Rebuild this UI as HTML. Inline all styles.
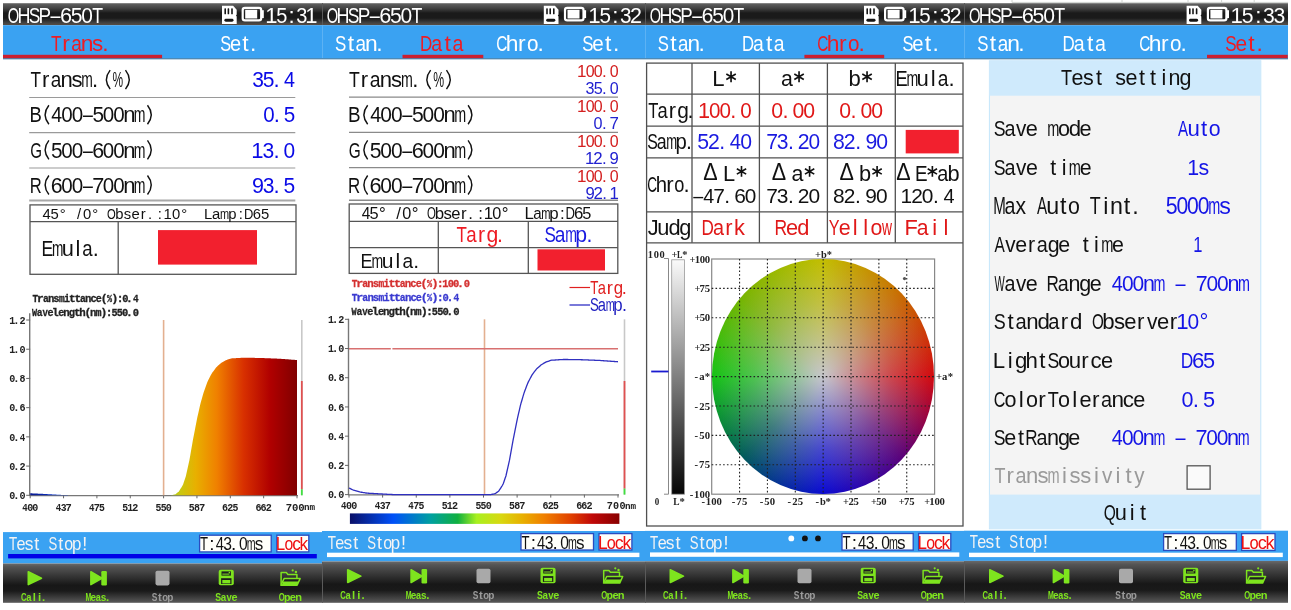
<!DOCTYPE html>
<html><head><meta charset="utf-8"><style>
html,body{margin:0;padding:0;background:#fff;width:1291px;height:610px;overflow:hidden}
svg{position:absolute;left:0;top:0;display:block}
text{font-kerning:none}
svg{will-change:transform}
</style></head><body>
<svg width="1291" height="610" viewBox="0 0 1291 610">
<defs><linearGradient id="hdr" x1="0" y1="0" x2="0" y2="1">
 <stop offset="0" stop-color="#9a9a9a"/><stop offset="0.06" stop-color="#5c5c5c"/><stop offset="0.25" stop-color="#404040"/>
 <stop offset="0.45" stop-color="#1a1a1a"/><stop offset="0.68" stop-color="#1a1a1a"/><stop offset="0.9" stop-color="#444"/><stop offset="1" stop-color="#5a4c40"/>
</linearGradient>
<linearGradient id="tb" x1="0" y1="0" x2="0" y2="1">
 <stop offset="0" stop-color="#6a6a6a"/><stop offset="0.08" stop-color="#555"/><stop offset="0.55" stop-color="#171717"/>
 <stop offset="0.7" stop-color="#1a1a1a"/><stop offset="1" stop-color="#5a5a5a"/>
</linearGradient><linearGradient id="spec" gradientUnits="userSpaceOnUse" x1="30.2" y1="0" x2="297" y2="0">
 <stop offset="0" stop-color="#0a1a90"/><stop offset="0.14" stop-color="#0a40e0"/>
 <stop offset="0.5" stop-color="#90d020"/><stop offset="0.56" stop-color="#c8c810"/>
 <stop offset="0.62" stop-color="#e8b000"/><stop offset="0.7" stop-color="#f08000"/>
 <stop offset="0.8" stop-color="#d83000"/><stop offset="0.9" stop-color="#b00000"/><stop offset="1" stop-color="#800000"/>
</linearGradient>
<linearGradient id="specbar" x1="0" y1="0" x2="1" y2="0">
 <stop offset="0" stop-color="#0a1068"/><stop offset="0.16" stop-color="#0050f8"/><stop offset="0.3" stop-color="#00a0a0"/>
 <stop offset="0.4" stop-color="#10b040"/><stop offset="0.47" stop-color="#a8f020"/><stop offset="0.56" stop-color="#d8d810"/>
 <stop offset="0.64" stop-color="#e8b000"/><stop offset="0.72" stop-color="#f08000"/><stop offset="0.82" stop-color="#e04000"/>
 <stop offset="0.9" stop-color="#c00808"/><stop offset="1" stop-color="#880000"/>
</linearGradient><linearGradient id="lbar" x1="0" y1="0" x2="0" y2="1"><stop offset="0" stop-color="#fafafa"/><stop offset="1" stop-color="#050505"/></linearGradient></defs>
<rect x="0" y="0" width="1291" height="610" fill="#fff"/>
<rect x="3" y="3" width="319" height="22.2" fill="url(#hdr)" />
<text x="7.71" y="22.7" font-family="Liberation Sans" font-weight="400" font-size="22.24" textLength="11.41" lengthAdjust="spacingAndGlyphs" fill="#fff" >O</text>
<text x="17.47" y="22.7" font-family="Liberation Sans" font-weight="400" font-size="22.24" textLength="12.94" lengthAdjust="spacingAndGlyphs" fill="#fff" >H</text>
<text x="28.68" y="22.7" font-family="Liberation Sans" font-weight="400" font-size="22.24" textLength="11.6" lengthAdjust="spacingAndGlyphs" fill="#fff" >S</text>
<text x="38.47" y="22.7" font-family="Liberation Sans" font-weight="400" font-size="22.24" textLength="12.54" lengthAdjust="spacingAndGlyphs" fill="#fff" >P</text>
<text x="50.55" y="22.7" font-family="Liberation Sans" font-weight="400" font-size="22.24" textLength="10.02" lengthAdjust="spacingAndGlyphs" fill="#fff" >–</text>
<text x="59.98" y="22.7" font-family="Liberation Sans" font-weight="400" font-size="22.24" textLength="12.06" lengthAdjust="spacingAndGlyphs" fill="#fff" >6</text>
<text x="70.77" y="22.7" font-family="Liberation Sans" font-weight="400" font-size="22.24" textLength="11.74" lengthAdjust="spacingAndGlyphs" fill="#fff" >5</text>
<text x="81.34" y="22.7" font-family="Liberation Sans" font-weight="400" font-size="22.24" textLength="11.65" lengthAdjust="spacingAndGlyphs" fill="#fff" >0</text>
<text x="92.29" y="22.7" font-family="Liberation Sans" font-weight="400" font-size="22.24" textLength="10.81" lengthAdjust="spacingAndGlyphs" fill="#fff" >T</text>
<path d="M222 5.8 H233.1 L236.7 9.8 V14.4 L236 15.5 L236.7 16.6 V23.9 H222 Z" fill="#fff"/>
<rect x="224.4" y="8.3" width="1.6" height="6" fill="#151515" rx="0.6"/>
<rect x="227.6" y="8.3" width="1.6" height="6" fill="#151515" rx="0.6"/>
<rect x="231.2" y="8.3" width="1.6" height="6" fill="#151515" rx="0.6"/>
<rect x="224.4" y="18.8" width="9.1" height="2.9" fill="#151515" rx="1.4"/>
<rect x="242.7" y="7.9" width="18.5" height="12.5" rx="2.2" fill="none" stroke="#fff" stroke-width="2.2"/>
<rect x="261.7" y="10.2" width="2.1" height="7.9" fill="#fff" />
<rect x="245.2" y="9.8" width="12" height="8.7" fill="#fff" />
<text x="265.33" y="22.7" font-family="Liberation Sans" font-weight="400" font-size="22.24" textLength="12.23" lengthAdjust="spacingAndGlyphs" fill="#fff" >1</text>
<text x="276.18" y="22.7" font-family="Liberation Sans" font-weight="400" font-size="22.24" textLength="11.12" lengthAdjust="spacingAndGlyphs" fill="#fff" >5</text>
<text x="296.18" y="22.7" font-family="Liberation Sans" font-weight="400" font-size="22.24" textLength="11.12" lengthAdjust="spacingAndGlyphs" fill="#fff" >3</text>
<text x="305.24" y="22.7" font-family="Liberation Sans" font-weight="400" font-size="22.24" textLength="12.23" lengthAdjust="spacingAndGlyphs" fill="#fff" >1</text>
<text x="288.61" y="22.7" font-family="Liberation Sans" font-weight="400" font-size="22.24" fill="#fff" >:</text>
<rect x="3" y="25.2" width="319" height="33.3" fill="#3aa2f2" />
<rect x="3" y="58.3" width="319" height="1" fill="#2c6d9c" />
<rect x="322" y="3" width="323" height="22.2" fill="url(#hdr)" />
<text x="326.8" y="22.7" font-family="Liberation Sans" font-weight="400" font-size="22.24" textLength="11.43" lengthAdjust="spacingAndGlyphs" fill="#fff" >O</text>
<text x="336.59" y="22.7" font-family="Liberation Sans" font-weight="400" font-size="22.24" textLength="12.97" lengthAdjust="spacingAndGlyphs" fill="#fff" >H</text>
<text x="347.83" y="22.7" font-family="Liberation Sans" font-weight="400" font-size="22.24" textLength="11.62" lengthAdjust="spacingAndGlyphs" fill="#fff" >S</text>
<text x="357.63" y="22.7" font-family="Liberation Sans" font-weight="400" font-size="22.24" textLength="12.57" lengthAdjust="spacingAndGlyphs" fill="#fff" >P</text>
<text x="369.73" y="22.7" font-family="Liberation Sans" font-weight="400" font-size="22.24" textLength="10.04" lengthAdjust="spacingAndGlyphs" fill="#fff" >–</text>
<text x="379.19" y="22.7" font-family="Liberation Sans" font-weight="400" font-size="22.24" textLength="12.09" lengthAdjust="spacingAndGlyphs" fill="#fff" >6</text>
<text x="390" y="22.7" font-family="Liberation Sans" font-weight="400" font-size="22.24" textLength="11.77" lengthAdjust="spacingAndGlyphs" fill="#fff" >5</text>
<text x="400.59" y="22.7" font-family="Liberation Sans" font-weight="400" font-size="22.24" textLength="11.67" lengthAdjust="spacingAndGlyphs" fill="#fff" >0</text>
<text x="411.57" y="22.7" font-family="Liberation Sans" font-weight="400" font-size="22.24" textLength="10.84" lengthAdjust="spacingAndGlyphs" fill="#fff" >T</text>
<path d="M543.8 5.8 H554.9 L558.5 9.8 V14.4 L557.8 15.5 L558.5 16.6 V23.9 H543.8 Z" fill="#fff"/>
<rect x="546.2" y="8.3" width="1.6" height="6" fill="#151515" rx="0.6"/>
<rect x="549.4" y="8.3" width="1.6" height="6" fill="#151515" rx="0.6"/>
<rect x="553" y="8.3" width="1.6" height="6" fill="#151515" rx="0.6"/>
<rect x="546.2" y="18.8" width="9.1" height="2.9" fill="#151515" rx="1.4"/>
<rect x="565" y="7.9" width="18.5" height="12.5" rx="2.2" fill="none" stroke="#fff" stroke-width="2.2"/>
<rect x="584" y="10.2" width="2.1" height="7.9" fill="#fff" />
<rect x="567.5" y="9.8" width="12" height="8.7" fill="#fff" />
<text x="599.39" y="22.7" font-family="Liberation Sans" font-weight="400" font-size="22.24" textLength="11.51" lengthAdjust="spacingAndGlyphs" fill="#fff" >5</text>
<text x="620.08" y="22.7" font-family="Liberation Sans" font-weight="400" font-size="22.24" textLength="11.51" lengthAdjust="spacingAndGlyphs" fill="#fff" >3</text>
<text x="630.11" y="22.7" font-family="Liberation Sans" font-weight="400" font-size="22.24" textLength="11.97" lengthAdjust="spacingAndGlyphs" fill="#fff" >2</text>
<text x="588.31 612.36" y="22.7" font-family="Liberation Sans" font-weight="400" font-size="22.24" fill="#fff" >1:</text>
<rect x="322" y="25.2" width="323" height="33.3" fill="#3aa2f2" />
<rect x="322" y="58.3" width="323" height="1" fill="#2c6d9c" />
<rect x="645" y="3" width="319" height="22.2" fill="url(#hdr)" />
<text x="649.71" y="22.7" font-family="Liberation Sans" font-weight="400" font-size="22.24" textLength="11.3" lengthAdjust="spacingAndGlyphs" fill="#fff" >O</text>
<text x="659.38" y="22.7" font-family="Liberation Sans" font-weight="400" font-size="22.24" textLength="12.82" lengthAdjust="spacingAndGlyphs" fill="#fff" >H</text>
<text x="670.49" y="22.7" font-family="Liberation Sans" font-weight="400" font-size="22.24" textLength="11.49" lengthAdjust="spacingAndGlyphs" fill="#fff" >S</text>
<text x="680.18" y="22.7" font-family="Liberation Sans" font-weight="400" font-size="22.24" textLength="12.42" lengthAdjust="spacingAndGlyphs" fill="#fff" >P</text>
<text x="692.14" y="22.7" font-family="Liberation Sans" font-weight="400" font-size="22.24" textLength="9.92" lengthAdjust="spacingAndGlyphs" fill="#fff" >–</text>
<text x="701.49" y="22.7" font-family="Liberation Sans" font-weight="400" font-size="22.24" textLength="11.95" lengthAdjust="spacingAndGlyphs" fill="#fff" >6</text>
<text x="712.18" y="22.7" font-family="Liberation Sans" font-weight="400" font-size="22.24" textLength="11.63" lengthAdjust="spacingAndGlyphs" fill="#fff" >5</text>
<text x="722.64" y="22.7" font-family="Liberation Sans" font-weight="400" font-size="22.24" textLength="11.53" lengthAdjust="spacingAndGlyphs" fill="#fff" >0</text>
<text x="733.49" y="22.7" font-family="Liberation Sans" font-weight="400" font-size="22.24" textLength="10.71" lengthAdjust="spacingAndGlyphs" fill="#fff" >T</text>
<path d="M864 5.8 H875.1 L878.7 9.8 V14.4 L878 15.5 L878.7 16.6 V23.9 H864 Z" fill="#fff"/>
<rect x="866.4" y="8.3" width="1.6" height="6" fill="#151515" rx="0.6"/>
<rect x="869.6" y="8.3" width="1.6" height="6" fill="#151515" rx="0.6"/>
<rect x="873.2" y="8.3" width="1.6" height="6" fill="#151515" rx="0.6"/>
<rect x="866.4" y="18.8" width="9.1" height="2.9" fill="#151515" rx="1.4"/>
<rect x="885.1" y="7.9" width="18.5" height="12.5" rx="2.2" fill="none" stroke="#fff" stroke-width="2.2"/>
<rect x="904.1" y="10.2" width="2.1" height="7.9" fill="#fff" />
<rect x="887.6" y="9.8" width="12" height="8.7" fill="#fff" />
<text x="919.35" y="22.7" font-family="Liberation Sans" font-weight="400" font-size="22.24" textLength="11.41" lengthAdjust="spacingAndGlyphs" fill="#fff" >5</text>
<text x="939.86" y="22.7" font-family="Liberation Sans" font-weight="400" font-size="22.24" textLength="11.41" lengthAdjust="spacingAndGlyphs" fill="#fff" >3</text>
<text x="949.8" y="22.7" font-family="Liberation Sans" font-weight="400" font-size="22.24" textLength="11.87" lengthAdjust="spacingAndGlyphs" fill="#fff" >2</text>
<text x="908.31 932.18" y="22.7" font-family="Liberation Sans" font-weight="400" font-size="22.24" fill="#fff" >1:</text>
<rect x="645" y="25.2" width="319" height="33.3" fill="#3aa2f2" />
<rect x="645" y="58.3" width="319" height="1" fill="#2c6d9c" />
<rect x="964" y="3" width="324" height="22.2" fill="url(#hdr)" />
<text x="968.9" y="22.7" font-family="Liberation Sans" font-weight="400" font-size="22.24" textLength="11.51" lengthAdjust="spacingAndGlyphs" fill="#fff" >O</text>
<text x="978.75" y="22.7" font-family="Liberation Sans" font-weight="400" font-size="22.24" textLength="13.06" lengthAdjust="spacingAndGlyphs" fill="#fff" >H</text>
<text x="990.08" y="22.7" font-family="Liberation Sans" font-weight="400" font-size="22.24" textLength="11.71" lengthAdjust="spacingAndGlyphs" fill="#fff" >S</text>
<text x="999.95" y="22.7" font-family="Liberation Sans" font-weight="400" font-size="22.24" textLength="12.66" lengthAdjust="spacingAndGlyphs" fill="#fff" >P</text>
<text x="1012.15" y="22.7" font-family="Liberation Sans" font-weight="400" font-size="22.24" textLength="10.11" lengthAdjust="spacingAndGlyphs" fill="#fff" >–</text>
<text x="1021.67" y="22.7" font-family="Liberation Sans" font-weight="400" font-size="22.24" textLength="12.18" lengthAdjust="spacingAndGlyphs" fill="#fff" >6</text>
<text x="1032.57" y="22.7" font-family="Liberation Sans" font-weight="400" font-size="22.24" textLength="11.85" lengthAdjust="spacingAndGlyphs" fill="#fff" >5</text>
<text x="1043.23" y="22.7" font-family="Liberation Sans" font-weight="400" font-size="22.24" textLength="11.76" lengthAdjust="spacingAndGlyphs" fill="#fff" >0</text>
<text x="1054.29" y="22.7" font-family="Liberation Sans" font-weight="400" font-size="22.24" textLength="10.92" lengthAdjust="spacingAndGlyphs" fill="#fff" >T</text>
<path d="M1186.6 5.8 H1197.7 L1201.3 9.8 V14.4 L1200.6 15.5 L1201.3 16.6 V23.9 H1186.6 Z" fill="#fff"/>
<rect x="1189" y="8.3" width="1.6" height="6" fill="#151515" rx="0.6"/>
<rect x="1192.2" y="8.3" width="1.6" height="6" fill="#151515" rx="0.6"/>
<rect x="1195.8" y="8.3" width="1.6" height="6" fill="#151515" rx="0.6"/>
<rect x="1189" y="18.8" width="9.1" height="2.9" fill="#151515" rx="1.4"/>
<rect x="1207.9" y="7.9" width="18.5" height="12.5" rx="2.2" fill="none" stroke="#fff" stroke-width="2.2"/>
<rect x="1226.9" y="10.2" width="2.1" height="7.9" fill="#fff" />
<rect x="1210.4" y="9.8" width="12" height="8.7" fill="#fff" />
<text x="1241.8" y="22.7" font-family="Liberation Sans" font-weight="400" font-size="22.24" textLength="11.78" lengthAdjust="spacingAndGlyphs" fill="#fff" >5</text>
<text x="1262.98" y="22.7" font-family="Liberation Sans" font-weight="400" font-size="22.24" textLength="11.78" lengthAdjust="spacingAndGlyphs" fill="#fff" >3</text>
<text x="1273.55" y="22.7" font-family="Liberation Sans" font-weight="400" font-size="22.24" textLength="11.78" lengthAdjust="spacingAndGlyphs" fill="#fff" >3</text>
<text x="1230.61 1255.15" y="22.7" font-family="Liberation Sans" font-weight="400" font-size="22.24" fill="#fff" >1:</text>
<rect x="964" y="25.2" width="324" height="33.3" fill="#3aa2f2" />
<rect x="964" y="58.3" width="324" height="1" fill="#2c6d9c" />
<rect x="3" y="54.8" width="159.1" height="3.4" fill="#cc1f30" />
<text x="51.11" y="50.6" font-family="Liberation Sans" font-weight="400" font-size="22.82" textLength="10.54" lengthAdjust="spacingAndGlyphs" fill="#ee1c24" >T</text>
<text x="71.23" y="50.6" font-family="Liberation Sans" font-weight="400" font-size="22.82" textLength="10.56" lengthAdjust="spacingAndGlyphs" fill="#ee1c24" >a</text>
<text x="91.95" y="50.6" font-family="Liberation Sans" font-weight="400" font-size="22.82" textLength="11.18" lengthAdjust="spacingAndGlyphs" fill="#ee1c24" >s</text>
<text x="62.28 80.82 102.28" y="50.6" font-family="Liberation Sans" font-weight="400" font-size="22.82" fill="#ee1c24" >rn.</text>
<text x="220.26" y="50.6" font-family="Liberation Sans" font-weight="400" font-size="22.82" textLength="10.9" lengthAdjust="spacingAndGlyphs" fill="#fff" >S</text>
<text x="230.05" y="50.6" font-family="Liberation Sans" font-weight="400" font-size="22.82" textLength="11.15" lengthAdjust="spacingAndGlyphs" fill="#fff" >e</text>
<text x="242.25 250.06" y="50.6" font-family="Liberation Sans" font-weight="400" font-size="22.82" fill="#fff" >t.</text>
<rect x="402.5" y="54.8" width="80.8" height="3.4" fill="#cc1f30" />
<text x="335.03" y="50.6" font-family="Liberation Sans" font-weight="400" font-size="22.82" textLength="11.29" lengthAdjust="spacingAndGlyphs" fill="#fff" >S</text>
<text x="355.51" y="50.6" font-family="Liberation Sans" font-weight="400" font-size="22.82" textLength="10.55" lengthAdjust="spacingAndGlyphs" fill="#fff" >a</text>
<text x="347.67 365.09 376.29" y="50.6" font-family="Liberation Sans" font-weight="400" font-size="22.82" fill="#fff" >tn.</text>
<text x="420.11" y="50.6" font-family="Liberation Sans" font-weight="400" font-size="22.82" textLength="12.26" lengthAdjust="spacingAndGlyphs" fill="#ee1c24" >D</text>
<text x="431.25" y="50.6" font-family="Liberation Sans" font-weight="400" font-size="22.82" textLength="10.88" lengthAdjust="spacingAndGlyphs" fill="#ee1c24" >a</text>
<text x="452.42" y="50.6" font-family="Liberation Sans" font-weight="400" font-size="22.82" textLength="10.88" lengthAdjust="spacingAndGlyphs" fill="#ee1c24" >a</text>
<text x="444.43" y="50.6" font-family="Liberation Sans" font-weight="400" font-size="22.82" fill="#ee1c24" >t</text>
<text x="496.22" y="50.6" font-family="Liberation Sans" font-weight="400" font-size="22.82" textLength="11.11" lengthAdjust="spacingAndGlyphs" fill="#fff" >C</text>
<text x="526.91" y="50.6" font-family="Liberation Sans" font-weight="400" font-size="22.82" textLength="11.48" lengthAdjust="spacingAndGlyphs" fill="#fff" >o</text>
<text x="505.74 518.03 537.49" y="50.6" font-family="Liberation Sans" font-weight="400" font-size="22.82" fill="#fff" >hr.</text>
<text x="582.24" y="50.6" font-family="Liberation Sans" font-weight="400" font-size="22.82" textLength="11.22" lengthAdjust="spacingAndGlyphs" fill="#fff" >S</text>
<text x="592.31" y="50.6" font-family="Liberation Sans" font-weight="400" font-size="22.82" textLength="11.47" lengthAdjust="spacingAndGlyphs" fill="#fff" >e</text>
<text x="604.96 613" y="50.6" font-family="Liberation Sans" font-weight="400" font-size="22.82" fill="#fff" >t.</text>
<rect x="804.4" y="54.8" width="79.8" height="3.4" fill="#cc1f30" />
<text x="657.84" y="50.6" font-family="Liberation Sans" font-weight="400" font-size="22.82" textLength="11.15" lengthAdjust="spacingAndGlyphs" fill="#fff" >S</text>
<text x="678.06" y="50.6" font-family="Liberation Sans" font-weight="400" font-size="22.82" textLength="10.42" lengthAdjust="spacingAndGlyphs" fill="#fff" >a</text>
<text x="687.47" y="50.6" font-family="Liberation Sans" font-weight="400" font-size="22.82" textLength="12.59" lengthAdjust="spacingAndGlyphs" fill="#fff" >n</text>
<text x="670.28 698.52" y="50.6" font-family="Liberation Sans" font-weight="400" font-size="22.82" fill="#fff" >t.</text>
<text x="741.92" y="50.6" font-family="Liberation Sans" font-weight="400" font-size="22.82" textLength="12.11" lengthAdjust="spacingAndGlyphs" fill="#fff" >D</text>
<text x="752.93" y="50.6" font-family="Liberation Sans" font-weight="400" font-size="22.82" textLength="10.75" lengthAdjust="spacingAndGlyphs" fill="#fff" >a</text>
<text x="773.85" y="50.6" font-family="Liberation Sans" font-weight="400" font-size="22.82" textLength="10.75" lengthAdjust="spacingAndGlyphs" fill="#fff" >a</text>
<text x="765.92" y="50.6" font-family="Liberation Sans" font-weight="400" font-size="22.82" fill="#fff" >t</text>
<text x="817.22" y="50.6" font-family="Liberation Sans" font-weight="400" font-size="22.82" textLength="11.11" lengthAdjust="spacingAndGlyphs" fill="#ee1c24" >C</text>
<text x="847.91" y="50.6" font-family="Liberation Sans" font-weight="400" font-size="22.82" textLength="11.48" lengthAdjust="spacingAndGlyphs" fill="#ee1c24" >o</text>
<text x="826.74 839.03 858.49" y="50.6" font-family="Liberation Sans" font-weight="400" font-size="22.82" fill="#ee1c24" >hr.</text>
<text x="902.45" y="50.6" font-family="Liberation Sans" font-weight="400" font-size="22.82" textLength="11" lengthAdjust="spacingAndGlyphs" fill="#fff" >S</text>
<text x="912.33" y="50.6" font-family="Liberation Sans" font-weight="400" font-size="22.82" textLength="11.25" lengthAdjust="spacingAndGlyphs" fill="#fff" >e</text>
<text x="924.66 932.55" y="50.6" font-family="Liberation Sans" font-weight="400" font-size="22.82" fill="#fff" >t.</text>
<rect x="1207" y="54.8" width="80.7" height="3.4" fill="#cc1f30" />
<text x="977.23" y="50.6" font-family="Liberation Sans" font-weight="400" font-size="22.82" textLength="11.24" lengthAdjust="spacingAndGlyphs" fill="#fff" >S</text>
<text x="997.63" y="50.6" font-family="Liberation Sans" font-weight="400" font-size="22.82" textLength="10.51" lengthAdjust="spacingAndGlyphs" fill="#fff" >a</text>
<text x="989.81 1007.14 1018.3" y="50.6" font-family="Liberation Sans" font-weight="400" font-size="22.82" fill="#fff" >tn.</text>
<text x="1062.61" y="50.6" font-family="Liberation Sans" font-weight="400" font-size="22.82" textLength="12.26" lengthAdjust="spacingAndGlyphs" fill="#fff" >D</text>
<text x="1073.75" y="50.6" font-family="Liberation Sans" font-weight="400" font-size="22.82" textLength="10.88" lengthAdjust="spacingAndGlyphs" fill="#fff" >a</text>
<text x="1094.92" y="50.6" font-family="Liberation Sans" font-weight="400" font-size="22.82" textLength="10.88" lengthAdjust="spacingAndGlyphs" fill="#fff" >a</text>
<text x="1086.93" y="50.6" font-family="Liberation Sans" font-weight="400" font-size="22.82" fill="#fff" >t</text>
<text x="1139.22" y="50.6" font-family="Liberation Sans" font-weight="400" font-size="22.82" textLength="11.11" lengthAdjust="spacingAndGlyphs" fill="#fff" >C</text>
<text x="1169.91" y="50.6" font-family="Liberation Sans" font-weight="400" font-size="22.82" textLength="11.48" lengthAdjust="spacingAndGlyphs" fill="#fff" >o</text>
<text x="1148.74 1161.03 1180.49" y="50.6" font-family="Liberation Sans" font-weight="400" font-size="22.82" fill="#fff" >hr.</text>
<text x="1225.23" y="50.6" font-family="Liberation Sans" font-weight="400" font-size="22.82" textLength="11.38" lengthAdjust="spacingAndGlyphs" fill="#ee1c24" >S</text>
<text x="1235.45" y="50.6" font-family="Liberation Sans" font-weight="400" font-size="22.82" textLength="11.64" lengthAdjust="spacingAndGlyphs" fill="#ee1c24" >e</text>
<text x="1248.32 1256.47" y="50.6" font-family="Liberation Sans" font-weight="400" font-size="22.82" fill="#ee1c24" >t.</text>
<text x="30.61" y="87.3" font-family="Liberation Sans" font-weight="400" font-size="22.09" textLength="10.51" lengthAdjust="spacingAndGlyphs" fill="#111" >T</text>
<text x="50.69" y="87.3" font-family="Liberation Sans" font-weight="400" font-size="22.09" textLength="10.54" lengthAdjust="spacingAndGlyphs" fill="#111" >a</text>
<text x="81.3" y="87.3" font-family="Liberation Sans" font-weight="400" font-size="22.09" textLength="11.57" lengthAdjust="spacingAndGlyphs" fill="#111" >m</text>
<path d="M110.17 70.12 Q102.67 79.62 110.17 89.12" stroke="#111" stroke-width="1.44" fill="none"/>
<text x="112.54" y="87.3" font-family="Liberation Sans" font-weight="400" font-size="22.09" textLength="10.58" lengthAdjust="spacingAndGlyphs" fill="#111" >%</text>
<path d="M125.49 70.12 Q132.98 79.62 125.49 89.12" stroke="#111" stroke-width="1.44" fill="none"/>
<text x="41.88 60.44 71.41 92.01" y="87.3" font-family="Liberation Sans" font-weight="400" font-size="22.09" fill="#111" >rns.</text>
<text x="252.2" y="87.3" font-family="Liberation Sans" font-weight="400" font-size="22.09" textLength="11.68" lengthAdjust="spacingAndGlyphs" fill="#0a0ae6" >3</text>
<text x="262.64" y="87.3" font-family="Liberation Sans" font-weight="400" font-size="22.09" textLength="11.68" lengthAdjust="spacingAndGlyphs" fill="#0a0ae6" >5</text>
<text x="283.99" y="87.3" font-family="Liberation Sans" font-weight="400" font-size="22.09" textLength="10.99" lengthAdjust="spacingAndGlyphs" fill="#0a0ae6" >4</text>
<text x="273.57" y="87.3" font-family="Liberation Sans" font-weight="400" font-size="22.09" fill="#0a0ae6" >.</text>
<text x="29.48" y="122.45" font-family="Liberation Sans" font-weight="400" font-size="22.09" textLength="12.35" lengthAdjust="spacingAndGlyphs" fill="#111" >B</text>
<path d="M48.89 105.27 Q41.4 114.77 48.89 124.27" stroke="#111" stroke-width="1.44" fill="none"/>
<text x="51.3" y="122.45" font-family="Liberation Sans" font-weight="400" font-size="22.09" textLength="10.88" lengthAdjust="spacingAndGlyphs" fill="#111" >4</text>
<text x="61.32" y="122.45" font-family="Liberation Sans" font-weight="400" font-size="22.09" textLength="11.47" lengthAdjust="spacingAndGlyphs" fill="#111" >0</text>
<text x="71.7" y="122.45" font-family="Liberation Sans" font-weight="400" font-size="22.09" textLength="11.47" lengthAdjust="spacingAndGlyphs" fill="#111" >0</text>
<text x="82.88" y="122.45" font-family="Liberation Sans" font-weight="400" font-size="22.09" textLength="9.87" lengthAdjust="spacingAndGlyphs" fill="#111" >–</text>
<text x="92.43" y="122.45" font-family="Liberation Sans" font-weight="400" font-size="22.09" textLength="11.56" lengthAdjust="spacingAndGlyphs" fill="#111" >5</text>
<text x="102.83" y="122.45" font-family="Liberation Sans" font-weight="400" font-size="22.09" textLength="11.47" lengthAdjust="spacingAndGlyphs" fill="#111" >0</text>
<text x="113.21" y="122.45" font-family="Liberation Sans" font-weight="400" font-size="22.09" textLength="11.47" lengthAdjust="spacingAndGlyphs" fill="#111" >0</text>
<text x="133.83" y="122.45" font-family="Liberation Sans" font-weight="400" font-size="22.09" textLength="11.72" lengthAdjust="spacingAndGlyphs" fill="#111" >m</text>
<path d="M147.49 105.27 Q154.98 114.77 147.49 124.27" stroke="#111" stroke-width="1.44" fill="none"/>
<text x="123.16" y="122.45" font-family="Liberation Sans" font-weight="400" font-size="22.09" fill="#111" >n</text>
<text x="263.2" y="122.45" font-family="Liberation Sans" font-weight="400" font-size="22.09" textLength="11.39" lengthAdjust="spacingAndGlyphs" fill="#0a0ae6" >0</text>
<text x="283.78" y="122.45" font-family="Liberation Sans" font-weight="400" font-size="22.09" textLength="11.48" lengthAdjust="spacingAndGlyphs" fill="#0a0ae6" >5</text>
<text x="273.86" y="122.45" font-family="Liberation Sans" font-weight="400" font-size="22.09" fill="#0a0ae6" >.</text>
<text x="30.24" y="157.6" font-family="Liberation Sans" font-weight="400" font-size="22.09" textLength="11.75" lengthAdjust="spacingAndGlyphs" fill="#111" >G</text>
<path d="M48.89 140.42 Q41.4 149.92 48.89 159.42" stroke="#111" stroke-width="1.44" fill="none"/>
<text x="50.92" y="157.6" font-family="Liberation Sans" font-weight="400" font-size="22.09" textLength="11.56" lengthAdjust="spacingAndGlyphs" fill="#111" >5</text>
<text x="61.32" y="157.6" font-family="Liberation Sans" font-weight="400" font-size="22.09" textLength="11.47" lengthAdjust="spacingAndGlyphs" fill="#111" >0</text>
<text x="71.7" y="157.6" font-family="Liberation Sans" font-weight="400" font-size="22.09" textLength="11.47" lengthAdjust="spacingAndGlyphs" fill="#111" >0</text>
<text x="82.88" y="157.6" font-family="Liberation Sans" font-weight="400" font-size="22.09" textLength="9.87" lengthAdjust="spacingAndGlyphs" fill="#111" >–</text>
<text x="92.17" y="157.6" font-family="Liberation Sans" font-weight="400" font-size="22.09" textLength="11.88" lengthAdjust="spacingAndGlyphs" fill="#111" >6</text>
<text x="102.83" y="157.6" font-family="Liberation Sans" font-weight="400" font-size="22.09" textLength="11.47" lengthAdjust="spacingAndGlyphs" fill="#111" >0</text>
<text x="113.21" y="157.6" font-family="Liberation Sans" font-weight="400" font-size="22.09" textLength="11.47" lengthAdjust="spacingAndGlyphs" fill="#111" >0</text>
<text x="133.83" y="157.6" font-family="Liberation Sans" font-weight="400" font-size="22.09" textLength="11.72" lengthAdjust="spacingAndGlyphs" fill="#111" >m</text>
<path d="M147.49 140.42 Q154.98 149.92 147.49 159.42" stroke="#111" stroke-width="1.44" fill="none"/>
<text x="123.16" y="157.6" font-family="Liberation Sans" font-weight="400" font-size="22.09" fill="#111" >n</text>
<text x="262.49" y="157.6" font-family="Liberation Sans" font-weight="400" font-size="22.09" textLength="11.75" lengthAdjust="spacingAndGlyphs" fill="#0a0ae6" >3</text>
<text x="283.57" y="157.6" font-family="Liberation Sans" font-weight="400" font-size="22.09" textLength="11.65" lengthAdjust="spacingAndGlyphs" fill="#0a0ae6" >0</text>
<text x="251.32 273.46" y="157.6" font-family="Liberation Sans" font-weight="400" font-size="22.09" fill="#0a0ae6" >1.</text>
<text x="29.64" y="192.75" font-family="Liberation Sans" font-weight="400" font-size="22.09" textLength="11.99" lengthAdjust="spacingAndGlyphs" fill="#111" >R</text>
<path d="M48.89 175.57 Q41.4 185.07 48.89 194.57" stroke="#111" stroke-width="1.44" fill="none"/>
<text x="50.67" y="192.75" font-family="Liberation Sans" font-weight="400" font-size="22.09" textLength="11.88" lengthAdjust="spacingAndGlyphs" fill="#111" >6</text>
<text x="61.32" y="192.75" font-family="Liberation Sans" font-weight="400" font-size="22.09" textLength="11.47" lengthAdjust="spacingAndGlyphs" fill="#111" >0</text>
<text x="71.7" y="192.75" font-family="Liberation Sans" font-weight="400" font-size="22.09" textLength="11.47" lengthAdjust="spacingAndGlyphs" fill="#111" >0</text>
<text x="82.88" y="192.75" font-family="Liberation Sans" font-weight="400" font-size="22.09" textLength="9.87" lengthAdjust="spacingAndGlyphs" fill="#111" >–</text>
<text x="92.15" y="192.75" font-family="Liberation Sans" font-weight="400" font-size="22.09" textLength="12.06" lengthAdjust="spacingAndGlyphs" fill="#111" >7</text>
<text x="102.83" y="192.75" font-family="Liberation Sans" font-weight="400" font-size="22.09" textLength="11.47" lengthAdjust="spacingAndGlyphs" fill="#111" >0</text>
<text x="113.21" y="192.75" font-family="Liberation Sans" font-weight="400" font-size="22.09" textLength="11.47" lengthAdjust="spacingAndGlyphs" fill="#111" >0</text>
<text x="133.83" y="192.75" font-family="Liberation Sans" font-weight="400" font-size="22.09" textLength="11.72" lengthAdjust="spacingAndGlyphs" fill="#111" >m</text>
<path d="M147.49 175.57 Q154.98 185.07 147.49 194.57" stroke="#111" stroke-width="1.44" fill="none"/>
<text x="123.16" y="192.75" font-family="Liberation Sans" font-weight="400" font-size="22.09" fill="#111" >n</text>
<text x="251.99" y="192.75" font-family="Liberation Sans" font-weight="400" font-size="22.09" textLength="11.99" lengthAdjust="spacingAndGlyphs" fill="#0a0ae6" >9</text>
<text x="262.68" y="192.75" font-family="Liberation Sans" font-weight="400" font-size="22.09" textLength="11.68" lengthAdjust="spacingAndGlyphs" fill="#0a0ae6" >3</text>
<text x="283.6" y="192.75" font-family="Liberation Sans" font-weight="400" font-size="22.09" textLength="11.68" lengthAdjust="spacingAndGlyphs" fill="#0a0ae6" >5</text>
<text x="273.57" y="192.75" font-family="Liberation Sans" font-weight="400" font-size="22.09" fill="#0a0ae6" >.</text>
<line x1="29.2" y1="97.5" x2="295.3" y2="97.5" stroke="#9a9a9a" stroke-width="1.2" />
<line x1="29.2" y1="132.7" x2="295.3" y2="132.7" stroke="#9a9a9a" stroke-width="1.2" />
<line x1="29.2" y1="168" x2="295.3" y2="168" stroke="#9a9a9a" stroke-width="1.2" />
<line x1="29.2" y1="200.5" x2="295.3" y2="200.5" stroke="#a8a8a8" stroke-width="1.8" />
<rect x="30" y="204.9" width="266" height="69.4" fill="none" stroke="#555" stroke-width="1.3"/>
<line x1="30" y1="221.6" x2="296" y2="221.6" stroke="#555" stroke-width="1.3" />
<line x1="118.2" y1="221.6" x2="118.2" y2="274.3" stroke="#555" stroke-width="1.3" />
<text x="106.96" y="218.7" font-family="Liberation Sans" font-weight="400" font-size="14.83" textLength="8.75" lengthAdjust="spacingAndGlyphs" fill="#111" >O</text>
<text x="219.98" y="218.7" font-family="Liberation Sans" font-weight="400" font-size="14.83" textLength="9.13" lengthAdjust="spacingAndGlyphs" fill="#111" >m</text>
<text x="243.91" y="218.7" font-family="Liberation Sans" font-weight="400" font-size="14.83" textLength="9.37" lengthAdjust="spacingAndGlyphs" fill="#111" >D</text>
<text x="42.56 50.61 59.85 76.92 82.95 92.2 115.13 123.86 131.48 140.84 147.93 157.79 163.62 171.91 181.15 203.89 212.03 228.35 238.66 252.72 260.88" y="218.7" font-family="Liberation Sans" font-weight="400" font-size="14.83" fill="#111" >45°/0°bser.:10°Lap:65</text>
<text x="41.45" y="255.6" font-family="Liberation Sans" font-weight="400" font-size="21.8" textLength="11.76" lengthAdjust="spacingAndGlyphs" fill="#111" >E</text>
<text x="52.05" y="255.6" font-family="Liberation Sans" font-weight="400" font-size="21.8" textLength="11.36" lengthAdjust="spacingAndGlyphs" fill="#111" >m</text>
<text x="82.34" y="255.6" font-family="Liberation Sans" font-weight="400" font-size="21.8" textLength="10.34" lengthAdjust="spacingAndGlyphs" fill="#111" >a</text>
<text x="61.74 75.42 92.72" y="255.6" font-family="Liberation Sans" font-weight="400" font-size="21.8" fill="#111" >ul.</text>
<rect x="158" y="230.1" width="99" height="34.5" fill="#f2202e" />
<line x1="29.7" y1="313.2" x2="29.7" y2="495.8" stroke="#777" stroke-width="1.4" />
<line x1="29.7" y1="495.6" x2="298" y2="495.6" stroke="#777" stroke-width="1.2" />
<line x1="26.2" y1="495.3" x2="30.2" y2="495.3" stroke="#666" stroke-width="1" />
<text x="9.22" y="499" font-family="Liberation Mono" font-weight="700" font-size="11.23" textLength="6.05" lengthAdjust="spacingAndGlyphs" fill="#222" >0</text>
<text x="19.53" y="499" font-family="Liberation Mono" font-weight="700" font-size="11.23" textLength="6.05" lengthAdjust="spacingAndGlyphs" fill="#222" >0</text>
<text x="12.9" y="499" font-family="Liberation Mono" font-weight="700" font-size="11.23" fill="#222" >.</text>
<line x1="26.2" y1="466.08" x2="30.2" y2="466.08" stroke="#666" stroke-width="1" />
<text x="9.22" y="469.78" font-family="Liberation Mono" font-weight="700" font-size="11.23" textLength="6.05" lengthAdjust="spacingAndGlyphs" fill="#222" >0</text>
<text x="19.49" y="469.78" font-family="Liberation Mono" font-weight="700" font-size="11.23" textLength="6.1" lengthAdjust="spacingAndGlyphs" fill="#222" >2</text>
<text x="12.9" y="469.78" font-family="Liberation Mono" font-weight="700" font-size="11.23" fill="#222" >.</text>
<line x1="26.2" y1="436.87" x2="30.2" y2="436.87" stroke="#666" stroke-width="1" />
<text x="9.22" y="440.57" font-family="Liberation Mono" font-weight="700" font-size="11.23" textLength="6.05" lengthAdjust="spacingAndGlyphs" fill="#222" >0</text>
<text x="19.79" y="440.57" font-family="Liberation Mono" font-weight="700" font-size="11.23" textLength="5.48" lengthAdjust="spacingAndGlyphs" fill="#222" >4</text>
<text x="12.9" y="440.57" font-family="Liberation Mono" font-weight="700" font-size="11.23" fill="#222" >.</text>
<line x1="26.2" y1="407.65" x2="30.2" y2="407.65" stroke="#666" stroke-width="1" />
<text x="9.22" y="411.35" font-family="Liberation Mono" font-weight="700" font-size="11.23" textLength="6.05" lengthAdjust="spacingAndGlyphs" fill="#222" >0</text>
<text x="19.49" y="411.35" font-family="Liberation Mono" font-weight="700" font-size="11.23" textLength="6.08" lengthAdjust="spacingAndGlyphs" fill="#222" >6</text>
<text x="12.9" y="411.35" font-family="Liberation Mono" font-weight="700" font-size="11.23" fill="#222" >.</text>
<line x1="26.2" y1="378.43" x2="30.2" y2="378.43" stroke="#666" stroke-width="1" />
<text x="9.22" y="382.13" font-family="Liberation Mono" font-weight="700" font-size="11.23" textLength="6.05" lengthAdjust="spacingAndGlyphs" fill="#222" >0</text>
<text x="19.58" y="382.13" font-family="Liberation Mono" font-weight="700" font-size="11.23" textLength="5.95" lengthAdjust="spacingAndGlyphs" fill="#222" >8</text>
<text x="12.9" y="382.13" font-family="Liberation Mono" font-weight="700" font-size="11.23" fill="#222" >.</text>
<line x1="26.2" y1="349.22" x2="30.2" y2="349.22" stroke="#666" stroke-width="1" />
<text x="9.13" y="352.92" font-family="Liberation Mono" font-weight="700" font-size="11.23" textLength="5.99" lengthAdjust="spacingAndGlyphs" fill="#222" >1</text>
<text x="19.53" y="352.92" font-family="Liberation Mono" font-weight="700" font-size="11.23" textLength="6.05" lengthAdjust="spacingAndGlyphs" fill="#222" >0</text>
<text x="12.9" y="352.92" font-family="Liberation Mono" font-weight="700" font-size="11.23" fill="#222" >.</text>
<line x1="26.2" y1="320" x2="30.2" y2="320" stroke="#666" stroke-width="1" />
<text x="9.13" y="323.7" font-family="Liberation Mono" font-weight="700" font-size="11.23" textLength="5.99" lengthAdjust="spacingAndGlyphs" fill="#222" >1</text>
<text x="19.49" y="323.7" font-family="Liberation Mono" font-weight="700" font-size="11.23" textLength="6.1" lengthAdjust="spacingAndGlyphs" fill="#222" >2</text>
<text x="12.9" y="323.7" font-family="Liberation Mono" font-weight="700" font-size="11.23" fill="#222" >.</text>
<line x1="30.2" y1="495.3" x2="30.2" y2="498.3" stroke="#666" stroke-width="1" />
<text x="22.28" y="510.5" font-family="Liberation Mono" font-weight="700" font-size="10.63" textLength="5.48" lengthAdjust="spacingAndGlyphs" fill="#222" >4</text>
<text x="27.18" y="510.5" font-family="Liberation Mono" font-weight="700" font-size="10.63" textLength="6.05" lengthAdjust="spacingAndGlyphs" fill="#222" >0</text>
<text x="32.33" y="510.5" font-family="Liberation Mono" font-weight="700" font-size="10.63" textLength="6.05" lengthAdjust="spacingAndGlyphs" fill="#222" >0</text>
<line x1="63.55" y1="495.3" x2="63.55" y2="498.3" stroke="#666" stroke-width="1" />
<text x="55.63" y="510.5" font-family="Liberation Mono" font-weight="700" font-size="10.63" textLength="5.48" lengthAdjust="spacingAndGlyphs" fill="#222" >4</text>
<text x="60.66" y="510.5" font-family="Liberation Mono" font-weight="700" font-size="10.63" textLength="5.83" lengthAdjust="spacingAndGlyphs" fill="#222" >3</text>
<text x="65.59" y="510.5" font-family="Liberation Mono" font-weight="700" font-size="10.63" textLength="6.26" lengthAdjust="spacingAndGlyphs" fill="#222" >7</text>
<line x1="96.9" y1="495.3" x2="96.9" y2="498.3" stroke="#666" stroke-width="1" />
<text x="88.98" y="510.5" font-family="Liberation Mono" font-weight="700" font-size="10.63" textLength="5.48" lengthAdjust="spacingAndGlyphs" fill="#222" >4</text>
<text x="93.79" y="510.5" font-family="Liberation Mono" font-weight="700" font-size="10.63" textLength="6.26" lengthAdjust="spacingAndGlyphs" fill="#222" >7</text>
<text x="99.11" y="510.5" font-family="Liberation Mono" font-weight="700" font-size="10.63" textLength="5.9" lengthAdjust="spacingAndGlyphs" fill="#222" >5</text>
<line x1="130.25" y1="495.3" x2="130.25" y2="498.3" stroke="#666" stroke-width="1" />
<text x="122.15" y="510.5" font-family="Liberation Mono" font-weight="700" font-size="10.63" textLength="5.9" lengthAdjust="spacingAndGlyphs" fill="#222" >5</text>
<text x="127.13" y="510.5" font-family="Liberation Mono" font-weight="700" font-size="10.63" textLength="5.99" lengthAdjust="spacingAndGlyphs" fill="#222" >1</text>
<text x="132.34" y="510.5" font-family="Liberation Mono" font-weight="700" font-size="10.63" textLength="6.1" lengthAdjust="spacingAndGlyphs" fill="#222" >2</text>
<line x1="163.6" y1="495.3" x2="163.6" y2="498.3" stroke="#666" stroke-width="1" />
<text x="155.5" y="510.5" font-family="Liberation Mono" font-weight="700" font-size="10.63" textLength="5.9" lengthAdjust="spacingAndGlyphs" fill="#222" >5</text>
<text x="160.65" y="510.5" font-family="Liberation Mono" font-weight="700" font-size="10.63" textLength="5.9" lengthAdjust="spacingAndGlyphs" fill="#222" >5</text>
<text x="165.73" y="510.5" font-family="Liberation Mono" font-weight="700" font-size="10.63" textLength="6.05" lengthAdjust="spacingAndGlyphs" fill="#222" >0</text>
<line x1="196.95" y1="495.3" x2="196.95" y2="498.3" stroke="#666" stroke-width="1" />
<text x="188.85" y="510.5" font-family="Liberation Mono" font-weight="700" font-size="10.63" textLength="5.9" lengthAdjust="spacingAndGlyphs" fill="#222" >5</text>
<text x="193.97" y="510.5" font-family="Liberation Mono" font-weight="700" font-size="10.63" textLength="5.95" lengthAdjust="spacingAndGlyphs" fill="#222" >8</text>
<text x="198.99" y="510.5" font-family="Liberation Mono" font-weight="700" font-size="10.63" textLength="6.26" lengthAdjust="spacingAndGlyphs" fill="#222" >7</text>
<line x1="230.3" y1="495.3" x2="230.3" y2="498.3" stroke="#666" stroke-width="1" />
<text x="222.08" y="510.5" font-family="Liberation Mono" font-weight="700" font-size="10.63" textLength="6.08" lengthAdjust="spacingAndGlyphs" fill="#222" >6</text>
<text x="227.24" y="510.5" font-family="Liberation Mono" font-weight="700" font-size="10.63" textLength="6.1" lengthAdjust="spacingAndGlyphs" fill="#222" >2</text>
<text x="232.51" y="510.5" font-family="Liberation Mono" font-weight="700" font-size="10.63" textLength="5.9" lengthAdjust="spacingAndGlyphs" fill="#222" >5</text>
<line x1="263.65" y1="495.3" x2="263.65" y2="498.3" stroke="#666" stroke-width="1" />
<text x="255.43" y="510.5" font-family="Liberation Mono" font-weight="700" font-size="10.63" textLength="6.08" lengthAdjust="spacingAndGlyphs" fill="#222" >6</text>
<text x="260.58" y="510.5" font-family="Liberation Mono" font-weight="700" font-size="10.63" textLength="6.08" lengthAdjust="spacingAndGlyphs" fill="#222" >6</text>
<text x="265.74" y="510.5" font-family="Liberation Mono" font-weight="700" font-size="10.63" textLength="6.1" lengthAdjust="spacingAndGlyphs" fill="#222" >2</text>
<line x1="297" y1="495.3" x2="297" y2="498.3" stroke="#666" stroke-width="1" />
<text x="285.72 291.97 298.23" y="510.5" font-family="Liberation Mono" font-weight="700" font-size="10.63" fill="#222" >700</text>
<text x="303.99" y="510.4" font-family="Liberation Mono" font-weight="700" font-size="9.6" textLength="11.15" lengthAdjust="spacingAndGlyphs" fill="#222" >nm</text>
<line x1="163.6" y1="320" x2="163.6" y2="495.3" stroke="#e3b090" stroke-width="1.6" />
<line x1="301.8" y1="320" x2="301.8" y2="495.3" stroke="#c8c8c8" stroke-width="1.6" />
<line x1="301.8" y1="381" x2="301.8" y2="489.3" stroke="#e05050" stroke-width="1.8" />
<line x1="301.8" y1="489.3" x2="301.8" y2="495.3" stroke="#40e040" stroke-width="1.8" />
<path d="M30.2 493.25 L31.09 493.3 L31.98 493.34 L32.87 493.39 L33.76 493.43 L34.65 493.47 L35.54 493.52 L36.43 493.56 L37.31 493.61 L38.2 493.65 L39.09 493.69 L39.98 493.74 L40.87 493.78 L41.76 493.82 L42.65 493.87 L43.54 493.91 L44.43 493.96 L45.32 494 L46.21 494.04 L47.1 494.09 L47.99 494.13 L48.88 494.18 L49.77 494.23 L50.65 494.29 L51.54 494.34 L52.43 494.39 L53.32 494.44 L54.21 494.49 L55.1 494.54 L55.99 494.6 L56.88 494.65 L57.77 494.7 L58.66 494.75 L59.55 494.8 L60.44 494.85 L61.33 494.9 L62.22 494.96 L63.11 495.01 L63.99 495.03 L64.88 495.05 L65.77 495.08 L66.66 495.1 L67.55 495.12 L68.44 495.14 L69.33 495.17 L70.22 495.19 L71.11 495.21 L72 495.23 L72.89 495.26 L73.78 495.28 L74.67 495.3 L75.56 495.3 L76.45 495.3 L77.33 495.3 L78.22 495.3 L79.11 495.3 L80 495.3 L80.89 495.3 L81.78 495.3 L82.67 495.3 L83.56 495.3 L84.45 495.3 L85.34 495.3 L86.23 495.3 L87.12 495.3 L88.01 495.3 L88.9 495.3 L89.79 495.3 L90.67 495.3 L91.56 495.3 L92.45 495.3 L93.34 495.3 L94.23 495.3 L95.12 495.3 L96.01 495.3 L96.9 495.3 L97.79 495.3 L98.68 495.3 L99.57 495.3 L100.46 495.3 L101.35 495.3 L102.24 495.3 L103.13 495.3 L104.01 495.3 L104.9 495.3 L105.79 495.3 L106.68 495.3 L107.57 495.3 L108.46 495.3 L109.35 495.3 L110.24 495.3 L111.13 495.3 L112.02 495.3 L112.91 495.3 L113.8 495.3 L114.69 495.3 L115.58 495.3 L116.47 495.3 L117.35 495.3 L118.24 495.3 L119.13 495.3 L120.02 495.3 L120.91 495.3 L121.8 495.3 L122.69 495.3 L123.58 495.3 L124.47 495.3 L125.36 495.3 L126.25 495.3 L127.14 495.3 L128.03 495.3 L128.92 495.3 L129.81 495.3 L130.69 495.3 L131.58 495.3 L132.47 495.3 L133.36 495.3 L134.25 495.3 L135.14 495.3 L136.03 495.3 L136.92 495.3 L137.81 495.3 L138.7 495.3 L139.59 495.3 L140.48 495.3 L141.37 495.3 L142.26 495.3 L143.15 495.3 L144.03 495.3 L144.92 495.3 L145.81 495.3 L146.7 495.3 L147.59 495.3 L148.48 495.3 L149.37 495.3 L150.26 495.3 L151.15 495.3 L152.04 495.3 L152.93 495.3 L153.82 495.3 L154.71 495.3 L155.6 495.3 L156.49 495.3 L157.37 495.3 L158.26 495.3 L159.15 495.3 L160.04 495.3 L160.93 495.3 L161.82 495.3 L162.71 495.3 L163.6 495.3 L164.49 495.3 L165.38 495.3 L166.27 495.3 L167.16 495.3 L168.05 495.3 L168.94 495.3 L169.83 495.3 L170.71 495.3 L171.6 495.12 L172.49 494.95 L173.38 494.77 L174.27 494.6 L175.16 494.42 L176.05 493.73 L176.94 493.04 L177.83 492.34 L178.72 491.65 L179.61 490.25 L180.5 488.85 L181.39 487.45 L182.28 486.05 L183.17 484.28 L184.05 481.62 L184.94 478.97 L185.83 476.31 L186.72 472.29 L187.61 468.27 L188.5 464.26 L189.39 460.24 L190.28 455.13 L191.17 450.01 L192.06 444.9 L192.95 439.79 L193.84 435.22 L194.73 430.66 L195.62 426.09 L196.51 421.53 L197.39 417.09 L198.28 413.14 L199.17 409.19 L200.06 405.24 L200.95 401.73 L201.84 398.65 L202.73 395.58 L203.62 392.5 L204.51 389.88 L205.4 387.44 L206.29 385.01 L207.18 382.57 L208.07 380.5 L208.96 378.79 L209.85 377.08 L210.73 375.37 L211.62 373.66 L212.51 372.35 L213.4 371.13 L214.29 369.91 L215.18 368.69 L216.07 367.48 L216.96 366.67 L217.85 365.85 L218.74 365.04 L219.63 364.23 L220.52 363.42 L221.41 362.78 L222.3 362.26 L223.19 361.74 L224.07 361.22 L224.96 360.69 L225.85 360.17 L226.74 359.88 L227.63 359.58 L228.52 359.28 L229.41 358.98 L230.3 358.69 L231.19 358.41 L232.08 358.36 L232.97 358.31 L233.86 358.26 L234.75 358.21 L235.64 358.16 L236.53 358.1 L237.41 358.05 L238.3 358 L239.19 357.95 L240.08 357.9 L240.97 357.84 L241.86 357.79 L242.75 357.74 L243.64 357.69 L244.53 357.7 L245.42 357.72 L246.31 357.73 L247.2 357.75 L248.09 357.76 L248.98 357.78 L249.87 357.79 L250.75 357.81 L251.64 357.82 L252.53 357.84 L253.42 357.85 L254.31 357.86 L255.2 357.88 L256.09 357.89 L256.98 357.91 L257.87 357.92 L258.76 357.94 L259.65 357.95 L260.54 357.97 L261.43 357.98 L262.32 358.02 L263.21 358.05 L264.09 358.09 L264.98 358.13 L265.87 358.16 L266.76 358.2 L267.65 358.24 L268.54 358.27 L269.43 358.31 L270.32 358.35 L271.21 358.38 L272.1 358.42 L272.99 358.46 L273.88 358.49 L274.77 358.53 L275.66 358.57 L276.55 358.6 L277.43 358.64 L278.32 358.68 L279.21 358.71 L280.1 358.78 L280.99 358.84 L281.88 358.91 L282.77 358.98 L283.66 359.04 L284.55 359.11 L285.44 359.17 L286.33 359.24 L287.22 359.3 L288.11 359.37 L289 359.44 L289.89 359.5 L290.77 359.57 L291.66 359.63 L292.55 359.7 L293.44 359.76 L294.33 359.83 L295.22 359.9 L296.11 359.96 L297 360.03 L297 495.3 L30.2 495.3 Z" fill="url(#spec)"/>
<text x="32.52" y="302.1" font-family="Liberation Mono" font-weight="700" font-size="11.23" textLength="5.58" lengthAdjust="spacingAndGlyphs" fill="#222" stroke="#222" stroke-width="0.3">T</text>
<text x="42.89" y="302.1" font-family="Liberation Mono" font-weight="700" font-size="11.23" textLength="5.77" lengthAdjust="spacingAndGlyphs" fill="#222" stroke="#222" stroke-width="0.3">a</text>
<text x="47.98" y="302.1" font-family="Liberation Mono" font-weight="700" font-size="11.23" textLength="6.38" lengthAdjust="spacingAndGlyphs" fill="#222" stroke="#222" stroke-width="0.3">n</text>
<text x="53.35" y="302.1" font-family="Liberation Mono" font-weight="700" font-size="11.23" textLength="6.29" lengthAdjust="spacingAndGlyphs" fill="#222" stroke="#222" stroke-width="0.3">s</text>
<text x="58.95" y="302.1" font-family="Liberation Mono" font-weight="700" font-size="11.23" textLength="5.7" lengthAdjust="spacingAndGlyphs" fill="#222" stroke="#222" stroke-width="0.3">m</text>
<text x="63.98" y="302.1" font-family="Liberation Mono" font-weight="700" font-size="11.23" textLength="6.01" lengthAdjust="spacingAndGlyphs" fill="#222" stroke="#222" stroke-width="0.3">i</text>
<text x="79.94" y="302.1" font-family="Liberation Mono" font-weight="700" font-size="11.23" textLength="5.77" lengthAdjust="spacingAndGlyphs" fill="#222" stroke="#222" stroke-width="0.3">a</text>
<text x="85.03" y="302.1" font-family="Liberation Mono" font-weight="700" font-size="11.23" textLength="6.38" lengthAdjust="spacingAndGlyphs" fill="#222" stroke="#222" stroke-width="0.3">n</text>
<text x="90.47" y="302.1" font-family="Liberation Mono" font-weight="700" font-size="11.23" textLength="6.19" lengthAdjust="spacingAndGlyphs" fill="#222" stroke="#222" stroke-width="0.3">c</text>
<text x="95.83" y="302.1" font-family="Liberation Mono" font-weight="700" font-size="11.23" textLength="6.01" lengthAdjust="spacingAndGlyphs" fill="#222" stroke="#222" stroke-width="0.3">e</text>
<text x="106.91" y="302.1" font-family="Liberation Mono" font-weight="700" font-size="11.23" textLength="5.02" lengthAdjust="spacingAndGlyphs" fill="#222" stroke="#222" stroke-width="0.3">%</text>
<text x="122.19" y="302.1" font-family="Liberation Mono" font-weight="700" font-size="11.23" textLength="6.22" lengthAdjust="spacingAndGlyphs" fill="#222" stroke="#222" stroke-width="0.3">0</text>
<text x="133.05" y="302.1" font-family="Liberation Mono" font-weight="700" font-size="11.23" textLength="5.63" lengthAdjust="spacingAndGlyphs" fill="#222" stroke="#222" stroke-width="0.3">4</text>
<text x="37.1 69.09 74.38 100.65 111.44 116.64 126.06" y="302.1" font-family="Liberation Mono" font-weight="700" font-size="11.23" fill="#222" stroke="#222" stroke-width="0.3">rtt():.</text>
<text x="32" y="315.9" font-family="Liberation Mono" font-weight="700" font-size="11.23" textLength="5.07" lengthAdjust="spacingAndGlyphs" fill="#222" stroke="#222" stroke-width="0.3">W</text>
<text x="36.83" y="315.9" font-family="Liberation Mono" font-weight="700" font-size="11.23" textLength="5.81" lengthAdjust="spacingAndGlyphs" fill="#222" stroke="#222" stroke-width="0.3">a</text>
<text x="42.53" y="315.9" font-family="Liberation Mono" font-weight="700" font-size="11.23" textLength="5.36" lengthAdjust="spacingAndGlyphs" fill="#222" stroke="#222" stroke-width="0.3">v</text>
<text x="47.51" y="315.9" font-family="Liberation Mono" font-weight="700" font-size="11.23" textLength="6.05" lengthAdjust="spacingAndGlyphs" fill="#222" stroke="#222" stroke-width="0.3">e</text>
<text x="52.11" y="315.9" font-family="Liberation Mono" font-weight="700" font-size="11.23" textLength="6.74" lengthAdjust="spacingAndGlyphs" fill="#222" stroke="#222" stroke-width="0.3">l</text>
<text x="58.17" y="315.9" font-family="Liberation Mono" font-weight="700" font-size="11.23" textLength="6.05" lengthAdjust="spacingAndGlyphs" fill="#222" stroke="#222" stroke-width="0.3">e</text>
<text x="63.29" y="315.9" font-family="Liberation Mono" font-weight="700" font-size="11.23" textLength="6.43" lengthAdjust="spacingAndGlyphs" fill="#222" stroke="#222" stroke-width="0.3">n</text>
<text x="68.7" y="315.9" font-family="Liberation Mono" font-weight="700" font-size="11.23" textLength="6.29" lengthAdjust="spacingAndGlyphs" fill="#222" stroke="#222" stroke-width="0.3">g</text>
<text x="79.25" y="315.9" font-family="Liberation Mono" font-weight="700" font-size="11.23" textLength="6.48" lengthAdjust="spacingAndGlyphs" fill="#222" stroke="#222" stroke-width="0.3">h</text>
<text x="89.96" y="315.9" font-family="Liberation Mono" font-weight="700" font-size="11.23" textLength="6.43" lengthAdjust="spacingAndGlyphs" fill="#222" stroke="#222" stroke-width="0.3">n</text>
<text x="95.68" y="315.9" font-family="Liberation Mono" font-weight="700" font-size="11.23" textLength="5.74" lengthAdjust="spacingAndGlyphs" fill="#222" stroke="#222" stroke-width="0.3">m</text>
<text x="111.48" y="315.9" font-family="Liberation Mono" font-weight="700" font-size="11.23" textLength="6.11" lengthAdjust="spacingAndGlyphs" fill="#222" stroke="#222" stroke-width="0.3">5</text>
<text x="116.82" y="315.9" font-family="Liberation Mono" font-weight="700" font-size="11.23" textLength="6.11" lengthAdjust="spacingAndGlyphs" fill="#222" stroke="#222" stroke-width="0.3">5</text>
<text x="122.07" y="315.9" font-family="Liberation Mono" font-weight="700" font-size="11.23" textLength="6.26" lengthAdjust="spacingAndGlyphs" fill="#222" stroke="#222" stroke-width="0.3">0</text>
<text x="132.74" y="315.9" font-family="Liberation Mono" font-weight="700" font-size="11.23" textLength="6.26" lengthAdjust="spacingAndGlyphs" fill="#222" stroke="#222" stroke-width="0.3">0</text>
<text x="73.92 84.39 100.6 105.83 125.99" y="315.9" font-family="Liberation Mono" font-weight="700" font-size="11.23" fill="#222" stroke="#222" stroke-width="0.3">t():.</text>
<rect x="3" y="532.1" width="319" height="31.4" fill="#3aa2f2" />
<text x="8.9" y="549.8" font-family="Liberation Sans" font-weight="400" font-size="17.88" textLength="8.18" lengthAdjust="spacingAndGlyphs" fill="#f4f4f4" >T</text>
<text x="16.49" y="549.8" font-family="Liberation Sans" font-weight="400" font-size="17.88" textLength="8.98" lengthAdjust="spacingAndGlyphs" fill="#f4f4f4" >e</text>
<text x="24.66" y="549.8" font-family="Liberation Sans" font-weight="400" font-size="17.88" textLength="8.68" lengthAdjust="spacingAndGlyphs" fill="#f4f4f4" >s</text>
<text x="48.46" y="549.8" font-family="Liberation Sans" font-weight="400" font-size="17.88" textLength="8.77" lengthAdjust="spacingAndGlyphs" fill="#f4f4f4" >S</text>
<text x="64.33" y="549.8" font-family="Liberation Sans" font-weight="400" font-size="17.88" textLength="8.92" lengthAdjust="spacingAndGlyphs" fill="#f4f4f4" >o</text>
<text x="71.89" y="549.8" font-family="Liberation Sans" font-weight="400" font-size="17.88" textLength="9.37" lengthAdjust="spacingAndGlyphs" fill="#f4f4f4" >p</text>
<text x="34.35 58.27 82.26" y="549.8" font-family="Liberation Sans" font-weight="400" font-size="17.88" fill="#f4f4f4" >tt!</text>
<rect x="199.6" y="535.2" width="71.6" height="16.7" fill="#fffffa" stroke="#2a4cc0" stroke-width="1.3"/>
<text x="200.1" y="550.4" font-family="Liberation Sans" font-weight="400" font-size="19.04" textLength="8.03" lengthAdjust="spacingAndGlyphs" fill="#111" >T</text>
<text x="215.71" y="550.4" font-family="Liberation Sans" font-weight="400" font-size="19.04" textLength="8.2" lengthAdjust="spacingAndGlyphs" fill="#111" >4</text>
<text x="223.27" y="550.4" font-family="Liberation Sans" font-weight="400" font-size="19.04" textLength="8.72" lengthAdjust="spacingAndGlyphs" fill="#111" >3</text>
<text x="238.91" y="550.4" font-family="Liberation Sans" font-weight="400" font-size="19.04" textLength="8.65" lengthAdjust="spacingAndGlyphs" fill="#111" >0</text>
<text x="246.64" y="550.4" font-family="Liberation Sans" font-weight="400" font-size="19.04" textLength="8.84" lengthAdjust="spacingAndGlyphs" fill="#111" >m</text>
<text x="254.69" y="550.4" font-family="Liberation Sans" font-weight="400" font-size="19.04" textLength="8.52" lengthAdjust="spacingAndGlyphs" fill="#111" >s</text>
<text x="209.3 231.05" y="550.4" font-family="Liberation Sans" font-weight="400" font-size="19.04" fill="#111" >:.</text>
<rect x="276.8" y="535.2" width="32" height="16.7" fill="#fffffa" stroke="#2a4cc0" stroke-width="1.3"/>
<text x="275.81" y="550.4" font-family="Liberation Sans" font-weight="400" font-size="19.04" textLength="9.4" lengthAdjust="spacingAndGlyphs" fill="#ee1111" >L</text>
<text x="284.39" y="550.4" font-family="Liberation Sans" font-weight="400" font-size="19.04" textLength="8.78" lengthAdjust="spacingAndGlyphs" fill="#ee1111" >o</text>
<text x="292.16" y="550.4" font-family="Liberation Sans" font-weight="400" font-size="19.04" textLength="8.65" lengthAdjust="spacingAndGlyphs" fill="#ee1111" >c</text>
<text x="299.59" y="550.4" font-family="Liberation Sans" font-weight="400" font-size="19.04" textLength="8.59" lengthAdjust="spacingAndGlyphs" fill="#ee1111" >k</text>
<rect x="8.1" y="554" width="308.7" height="4.4" fill="#0000e8" />
<rect x="3" y="563.5" width="319" height="39.3" fill="url(#tb)" />
<g transform="translate(0,0)">
<path d="M28.3 571.8 L41.5 578.2 L28.3 584.6 Z" fill="#7ee41e" stroke="#7ee41e" stroke-width="1.6" stroke-linejoin="round"/>
<path d="M90.9 571.8 L101.9 578.2 L90.9 584.6 Z" fill="#7ee41e" stroke="#7ee41e" stroke-width="1.6" stroke-linejoin="round"/>
<rect x="101.3" y="571" width="5.6" height="14.5" fill="#7ee41e" rx="1.2"/>
<rect x="155.5" y="570.8" width="14" height="14.6" fill="#a9a9a9" rx="1.8"/>
<rect x="218.7" y="569.8" width="15.1" height="15.5" fill="#7ee41e" rx="2"/>
<rect x="221.5" y="571.4" width="9.4" height="4.2" fill="#1e1e1e" />
<rect x="222.3" y="573.6" width="7" height="1" fill="#7ee41e" />
<rect x="228.7" y="571.9" width="1.4" height="1.4" fill="#7ee41e" />
<rect x="221.1" y="578.2" width="10.4" height="5.8" fill="#1e1e1e" />
<rect x="222.3" y="580" width="8" height="3.4" fill="#7ee41e" />
<path d="M281.1 584.6 V572.6 H286.3 L287.9 574.4 H296.9 V578.4" fill="none" stroke="#7ee41e" stroke-width="1.5" stroke-linejoin="round"/>
<path d="M280.9 585.2 L284.1 578.6 H300.1 L297.1 585.2 Z" fill="#1e1e1e" stroke="#7ee41e" stroke-width="1.5" stroke-linejoin="round"/>
<path d="M281.7 585.2 L283.3 581.6 H298.7 L297.1 585.2 Z" fill="#7ee41e"/>
<circle cx="292.7" cy="570.4" r="1.1" fill="#7ee41e"/><circle cx="295.9" cy="572.0" r="1.2" fill="#7ee41e"/>
<text x="20.89" y="600.9" font-family="Liberation Sans" font-weight="700" font-size="11.34" textLength="5.53" lengthAdjust="spacingAndGlyphs" fill="#7ee41e" >C</text>
<text x="26.2" y="600.9" font-family="Liberation Sans" font-weight="700" font-size="11.34" textLength="5.23" lengthAdjust="spacingAndGlyphs" fill="#7ee41e" >a</text>
<text x="32.68 37.96 42.07" y="600.9" font-family="Liberation Sans" font-weight="700" font-size="11.34" fill="#7ee41e" >li.</text>
<text x="85.44" y="600.9" font-family="Liberation Sans" font-weight="700" font-size="11.34" textLength="5.77" lengthAdjust="spacingAndGlyphs" fill="#7ee41e" >M</text>
<text x="90.6" y="600.9" font-family="Liberation Sans" font-weight="700" font-size="11.34" textLength="5.57" lengthAdjust="spacingAndGlyphs" fill="#7ee41e" >e</text>
<text x="95.82" y="600.9" font-family="Liberation Sans" font-weight="700" font-size="11.34" textLength="5.05" lengthAdjust="spacingAndGlyphs" fill="#7ee41e" >a</text>
<text x="100.83" y="600.9" font-family="Liberation Sans" font-weight="700" font-size="11.34" textLength="5.61" lengthAdjust="spacingAndGlyphs" fill="#7ee41e" >s</text>
<text x="106.01" y="600.9" font-family="Liberation Sans" font-weight="700" font-size="11.34" fill="#7ee41e" >.</text>
<text x="151.76" y="600.9" font-family="Liberation Sans" font-weight="700" font-size="11.34" textLength="5.62" lengthAdjust="spacingAndGlyphs" fill="#9a9a9a" >S</text>
<text x="162.26" y="600.9" font-family="Liberation Sans" font-weight="700" font-size="11.34" textLength="5.79" lengthAdjust="spacingAndGlyphs" fill="#9a9a9a" >o</text>
<text x="167.29" y="600.9" font-family="Liberation Sans" font-weight="700" font-size="11.34" textLength="6.12" lengthAdjust="spacingAndGlyphs" fill="#9a9a9a" >p</text>
<text x="157.95" y="600.9" font-family="Liberation Sans" font-weight="700" font-size="11.34" fill="#9a9a9a" >t</text>
<text x="215.15" y="600.9" font-family="Liberation Sans" font-weight="700" font-size="11.34" textLength="5.84" lengthAdjust="spacingAndGlyphs" fill="#7ee41e" >S</text>
<text x="220.63" y="600.9" font-family="Liberation Sans" font-weight="700" font-size="11.34" textLength="5.47" lengthAdjust="spacingAndGlyphs" fill="#7ee41e" >a</text>
<text x="226.4" y="600.9" font-family="Liberation Sans" font-weight="700" font-size="11.34" textLength="5.32" lengthAdjust="spacingAndGlyphs" fill="#7ee41e" >v</text>
<text x="231.53" y="600.9" font-family="Liberation Sans" font-weight="700" font-size="11.34" textLength="6.04" lengthAdjust="spacingAndGlyphs" fill="#7ee41e" >e</text>
<text x="278.63" y="600.9" font-family="Liberation Sans" font-weight="700" font-size="11.34" textLength="6" lengthAdjust="spacingAndGlyphs" fill="#7ee41e" >O</text>
<text x="283.89" y="600.9" font-family="Liberation Sans" font-weight="700" font-size="11.34" textLength="6.5" lengthAdjust="spacingAndGlyphs" fill="#7ee41e" >p</text>
<text x="289.81" y="600.9" font-family="Liberation Sans" font-weight="700" font-size="11.34" textLength="6.18" lengthAdjust="spacingAndGlyphs" fill="#7ee41e" >e</text>
<text x="295.15" y="600.9" font-family="Liberation Sans" font-weight="700" font-size="11.34" textLength="6.78" lengthAdjust="spacingAndGlyphs" fill="#7ee41e" >n</text>
</g>
<text x="349.1" y="87.3" font-family="Liberation Sans" font-weight="400" font-size="22.09" textLength="10.79" lengthAdjust="spacingAndGlyphs" fill="#111" >T</text>
<text x="369.69" y="87.3" font-family="Liberation Sans" font-weight="400" font-size="22.09" textLength="10.81" lengthAdjust="spacingAndGlyphs" fill="#111" >a</text>
<text x="401.1" y="87.3" font-family="Liberation Sans" font-weight="400" font-size="22.09" textLength="11.87" lengthAdjust="spacingAndGlyphs" fill="#111" >m</text>
<path d="M430.64 70.12 Q423.14 79.62 430.64 89.12" stroke="#111" stroke-width="1.44" fill="none"/>
<text x="433.14" y="87.3" font-family="Liberation Sans" font-weight="400" font-size="22.09" textLength="10.85" lengthAdjust="spacingAndGlyphs" fill="#111" >%</text>
<path d="M446.49 70.12 Q453.98 79.62 446.49 89.12" stroke="#111" stroke-width="1.44" fill="none"/>
<text x="360.77 379.86 391.1 412.16" y="87.3" font-family="Liberation Sans" font-weight="400" font-size="22.09" fill="#111" >rns.</text>
<text x="585.67" y="76.8" font-family="Liberation Sans" font-weight="400" font-size="17.01" textLength="8.9" lengthAdjust="spacingAndGlyphs" fill="#d42020" >0</text>
<text x="593.72" y="76.8" font-family="Liberation Sans" font-weight="400" font-size="17.01" textLength="8.9" lengthAdjust="spacingAndGlyphs" fill="#d42020" >0</text>
<text x="609.83" y="76.8" font-family="Liberation Sans" font-weight="400" font-size="17.01" textLength="8.9" lengthAdjust="spacingAndGlyphs" fill="#d42020" >0</text>
<text x="577.1 602.09" y="76.8" font-family="Liberation Sans" font-weight="400" font-size="17.01" fill="#d42020" >1.</text>
<text x="585.58" y="93.8" font-family="Liberation Sans" font-weight="400" font-size="16.86" textLength="9" lengthAdjust="spacingAndGlyphs" fill="#2222d0" >3</text>
<text x="593.63" y="93.8" font-family="Liberation Sans" font-weight="400" font-size="16.86" textLength="9" lengthAdjust="spacingAndGlyphs" fill="#2222d0" >5</text>
<text x="609.8" y="93.8" font-family="Liberation Sans" font-weight="400" font-size="16.86" textLength="8.93" lengthAdjust="spacingAndGlyphs" fill="#2222d0" >0</text>
<text x="602.07" y="93.8" font-family="Liberation Sans" font-weight="400" font-size="16.86" fill="#2222d0" >.</text>
<text x="347.95" y="122.45" font-family="Liberation Sans" font-weight="400" font-size="22.09" textLength="12.57" lengthAdjust="spacingAndGlyphs" fill="#111" >B</text>
<path d="M367.66 105.27 Q360.17 114.77 367.66 124.27" stroke="#111" stroke-width="1.44" fill="none"/>
<text x="370.16" y="122.45" font-family="Liberation Sans" font-weight="400" font-size="22.09" textLength="11.07" lengthAdjust="spacingAndGlyphs" fill="#111" >4</text>
<text x="380.36" y="122.45" font-family="Liberation Sans" font-weight="400" font-size="22.09" textLength="11.67" lengthAdjust="spacingAndGlyphs" fill="#111" >0</text>
<text x="390.92" y="122.45" font-family="Liberation Sans" font-weight="400" font-size="22.09" textLength="11.67" lengthAdjust="spacingAndGlyphs" fill="#111" >0</text>
<text x="402.3" y="122.45" font-family="Liberation Sans" font-weight="400" font-size="22.09" textLength="10.04" lengthAdjust="spacingAndGlyphs" fill="#111" >–</text>
<text x="412.01" y="122.45" font-family="Liberation Sans" font-weight="400" font-size="22.09" textLength="11.77" lengthAdjust="spacingAndGlyphs" fill="#111" >5</text>
<text x="422.6" y="122.45" font-family="Liberation Sans" font-weight="400" font-size="22.09" textLength="11.67" lengthAdjust="spacingAndGlyphs" fill="#111" >0</text>
<text x="433.16" y="122.45" font-family="Liberation Sans" font-weight="400" font-size="22.09" textLength="11.67" lengthAdjust="spacingAndGlyphs" fill="#111" >0</text>
<text x="454.15" y="122.45" font-family="Liberation Sans" font-weight="400" font-size="22.09" textLength="11.93" lengthAdjust="spacingAndGlyphs" fill="#111" >m</text>
<path d="M468.09 105.27 Q475.58 114.77 468.09 124.27" stroke="#111" stroke-width="1.44" fill="none"/>
<text x="443.39" y="122.45" font-family="Liberation Sans" font-weight="400" font-size="22.09" fill="#111" >n</text>
<text x="585.67" y="111.95" font-family="Liberation Sans" font-weight="400" font-size="17.01" textLength="8.9" lengthAdjust="spacingAndGlyphs" fill="#d42020" >0</text>
<text x="593.72" y="111.95" font-family="Liberation Sans" font-weight="400" font-size="17.01" textLength="8.9" lengthAdjust="spacingAndGlyphs" fill="#d42020" >0</text>
<text x="609.83" y="111.95" font-family="Liberation Sans" font-weight="400" font-size="17.01" textLength="8.9" lengthAdjust="spacingAndGlyphs" fill="#d42020" >0</text>
<text x="577.1 602.09" y="111.95" font-family="Liberation Sans" font-weight="400" font-size="17.01" fill="#d42020" >1.</text>
<text x="593.47" y="128.95" font-family="Liberation Sans" font-weight="400" font-size="16.86" textLength="9.01" lengthAdjust="spacingAndGlyphs" fill="#2222d0" >0</text>
<text x="601.98 609.57" y="128.95" font-family="Liberation Sans" font-weight="400" font-size="16.86" fill="#2222d0" >.7</text>
<text x="348.73" y="157.6" font-family="Liberation Sans" font-weight="400" font-size="22.09" textLength="11.95" lengthAdjust="spacingAndGlyphs" fill="#111" >G</text>
<path d="M367.66 140.42 Q360.17 149.92 367.66 159.42" stroke="#111" stroke-width="1.44" fill="none"/>
<text x="369.77" y="157.6" font-family="Liberation Sans" font-weight="400" font-size="22.09" textLength="11.77" lengthAdjust="spacingAndGlyphs" fill="#111" >5</text>
<text x="380.36" y="157.6" font-family="Liberation Sans" font-weight="400" font-size="22.09" textLength="11.67" lengthAdjust="spacingAndGlyphs" fill="#111" >0</text>
<text x="390.92" y="157.6" font-family="Liberation Sans" font-weight="400" font-size="22.09" textLength="11.67" lengthAdjust="spacingAndGlyphs" fill="#111" >0</text>
<text x="402.3" y="157.6" font-family="Liberation Sans" font-weight="400" font-size="22.09" textLength="10.04" lengthAdjust="spacingAndGlyphs" fill="#111" >–</text>
<text x="411.75" y="157.6" font-family="Liberation Sans" font-weight="400" font-size="22.09" textLength="12.09" lengthAdjust="spacingAndGlyphs" fill="#111" >6</text>
<text x="422.6" y="157.6" font-family="Liberation Sans" font-weight="400" font-size="22.09" textLength="11.67" lengthAdjust="spacingAndGlyphs" fill="#111" >0</text>
<text x="433.16" y="157.6" font-family="Liberation Sans" font-weight="400" font-size="22.09" textLength="11.67" lengthAdjust="spacingAndGlyphs" fill="#111" >0</text>
<text x="454.15" y="157.6" font-family="Liberation Sans" font-weight="400" font-size="22.09" textLength="11.93" lengthAdjust="spacingAndGlyphs" fill="#111" >m</text>
<path d="M468.09 140.42 Q475.58 149.92 468.09 159.42" stroke="#111" stroke-width="1.44" fill="none"/>
<text x="443.39" y="157.6" font-family="Liberation Sans" font-weight="400" font-size="22.09" fill="#111" >n</text>
<text x="585.67" y="147.1" font-family="Liberation Sans" font-weight="400" font-size="17.01" textLength="8.9" lengthAdjust="spacingAndGlyphs" fill="#d42020" >0</text>
<text x="593.72" y="147.1" font-family="Liberation Sans" font-weight="400" font-size="17.01" textLength="8.9" lengthAdjust="spacingAndGlyphs" fill="#d42020" >0</text>
<text x="609.83" y="147.1" font-family="Liberation Sans" font-weight="400" font-size="17.01" textLength="8.9" lengthAdjust="spacingAndGlyphs" fill="#d42020" >0</text>
<text x="577.1 602.09" y="147.1" font-family="Liberation Sans" font-weight="400" font-size="17.01" fill="#d42020" >1.</text>
<text x="609.59" y="164.1" font-family="Liberation Sans" font-weight="400" font-size="16.86" textLength="9.3" lengthAdjust="spacingAndGlyphs" fill="#2222d0" >9</text>
<text x="584.92 593.28 601.97" y="164.1" font-family="Liberation Sans" font-weight="400" font-size="16.86" fill="#2222d0" >12.</text>
<text x="348.11" y="192.75" font-family="Liberation Sans" font-weight="400" font-size="22.09" textLength="12.2" lengthAdjust="spacingAndGlyphs" fill="#111" >R</text>
<path d="M367.66 175.57 Q360.17 185.07 367.66 194.57" stroke="#111" stroke-width="1.44" fill="none"/>
<text x="369.52" y="192.75" font-family="Liberation Sans" font-weight="400" font-size="22.09" textLength="12.09" lengthAdjust="spacingAndGlyphs" fill="#111" >6</text>
<text x="380.36" y="192.75" font-family="Liberation Sans" font-weight="400" font-size="22.09" textLength="11.67" lengthAdjust="spacingAndGlyphs" fill="#111" >0</text>
<text x="390.92" y="192.75" font-family="Liberation Sans" font-weight="400" font-size="22.09" textLength="11.67" lengthAdjust="spacingAndGlyphs" fill="#111" >0</text>
<text x="402.3" y="192.75" font-family="Liberation Sans" font-weight="400" font-size="22.09" textLength="10.04" lengthAdjust="spacingAndGlyphs" fill="#111" >–</text>
<text x="411.73" y="192.75" font-family="Liberation Sans" font-weight="400" font-size="22.09" textLength="12.27" lengthAdjust="spacingAndGlyphs" fill="#111" >7</text>
<text x="422.6" y="192.75" font-family="Liberation Sans" font-weight="400" font-size="22.09" textLength="11.67" lengthAdjust="spacingAndGlyphs" fill="#111" >0</text>
<text x="433.16" y="192.75" font-family="Liberation Sans" font-weight="400" font-size="22.09" textLength="11.67" lengthAdjust="spacingAndGlyphs" fill="#111" >0</text>
<text x="454.15" y="192.75" font-family="Liberation Sans" font-weight="400" font-size="22.09" textLength="11.93" lengthAdjust="spacingAndGlyphs" fill="#111" >m</text>
<path d="M468.09 175.57 Q475.58 185.07 468.09 194.57" stroke="#111" stroke-width="1.44" fill="none"/>
<text x="443.39" y="192.75" font-family="Liberation Sans" font-weight="400" font-size="22.09" fill="#111" >n</text>
<text x="585.67" y="182.25" font-family="Liberation Sans" font-weight="400" font-size="17.01" textLength="8.9" lengthAdjust="spacingAndGlyphs" fill="#d42020" >0</text>
<text x="593.72" y="182.25" font-family="Liberation Sans" font-weight="400" font-size="17.01" textLength="8.9" lengthAdjust="spacingAndGlyphs" fill="#d42020" >0</text>
<text x="609.83" y="182.25" font-family="Liberation Sans" font-weight="400" font-size="17.01" textLength="8.9" lengthAdjust="spacingAndGlyphs" fill="#d42020" >0</text>
<text x="577.1 602.09" y="182.25" font-family="Liberation Sans" font-weight="400" font-size="17.01" fill="#d42020" >1.</text>
<text x="585.42" y="199.25" font-family="Liberation Sans" font-weight="400" font-size="16.86" textLength="9.3" lengthAdjust="spacingAndGlyphs" fill="#2222d0" >9</text>
<text x="593.51 602.2 609.55" y="199.25" font-family="Liberation Sans" font-weight="400" font-size="16.86" fill="#2222d0" >2.1</text>
<line x1="349" y1="97.2" x2="618" y2="97.2" stroke="#8a8a8a" stroke-width="1.2" />
<line x1="349" y1="132.4" x2="618" y2="132.4" stroke="#8a8a8a" stroke-width="1.2" />
<line x1="349" y1="167.6" x2="618" y2="167.6" stroke="#8a8a8a" stroke-width="1.2" />
<line x1="349" y1="200.2" x2="618" y2="200.2" stroke="#8a8a8a" stroke-width="1.4" />
<rect x="349.2" y="204.0" width="268.6" height="69.4" fill="none" stroke="#555" stroke-width="1.3"/>
<line x1="349.2" y1="221.4" x2="617.8" y2="221.4" stroke="#555" stroke-width="1.3" />
<line x1="349.2" y1="247.6" x2="617.8" y2="247.6" stroke="#555" stroke-width="1.3" />
<line x1="438.3" y1="221.4" x2="438.3" y2="273.4" stroke="#555" stroke-width="1.3" />
<line x1="528.3" y1="221.4" x2="528.3" y2="273.4" stroke="#555" stroke-width="1.3" />
<text x="361.65" y="219.2" font-family="Liberation Sans" font-weight="400" font-size="16.86" textLength="8.58" lengthAdjust="spacingAndGlyphs" fill="#111" >4</text>
<text x="369.53" y="219.2" font-family="Liberation Sans" font-weight="400" font-size="16.86" textLength="9.12" lengthAdjust="spacingAndGlyphs" fill="#111" >5</text>
<text x="402.29" y="219.2" font-family="Liberation Sans" font-weight="400" font-size="16.86" textLength="9.05" lengthAdjust="spacingAndGlyphs" fill="#111" >0</text>
<text x="426.95" y="219.2" font-family="Liberation Sans" font-weight="400" font-size="16.86" textLength="8.86" lengthAdjust="spacingAndGlyphs" fill="#111" >O</text>
<text x="451.34" y="219.2" font-family="Liberation Sans" font-weight="400" font-size="16.86" textLength="9.22" lengthAdjust="spacingAndGlyphs" fill="#111" >e</text>
<text x="492.34" y="219.2" font-family="Liberation Sans" font-weight="400" font-size="16.86" textLength="9.05" lengthAdjust="spacingAndGlyphs" fill="#111" >0</text>
<text x="533.26" y="219.2" font-family="Liberation Sans" font-weight="400" font-size="16.86" textLength="8.42" lengthAdjust="spacingAndGlyphs" fill="#111" >a</text>
<text x="541.36" y="219.2" font-family="Liberation Sans" font-weight="400" font-size="16.86" textLength="9.25" lengthAdjust="spacingAndGlyphs" fill="#111" >m</text>
<text x="565.57" y="219.2" font-family="Liberation Sans" font-weight="400" font-size="16.86" textLength="9.48" lengthAdjust="spacingAndGlyphs" fill="#111" >D</text>
<text x="573.98" y="219.2" font-family="Liberation Sans" font-weight="400" font-size="16.86" textLength="9.37" lengthAdjust="spacingAndGlyphs" fill="#111" >6</text>
<text x="582.37" y="219.2" font-family="Liberation Sans" font-weight="400" font-size="16.86" textLength="9.12" lengthAdjust="spacingAndGlyphs" fill="#111" >5</text>
<text x="378.89 396.29 411.64 434.68 443.6 460.89 468.16 478.15 483.76 501.68 524.51 549.29 560.01" y="219.2" font-family="Liberation Sans" font-weight="400" font-size="16.86" fill="#111" >°/°bsr.:1°Lp:</text>
<text x="456.62" y="241.7" font-family="Liberation Sans" font-weight="400" font-size="21.22" textLength="10.39" lengthAdjust="spacingAndGlyphs" fill="#ee1c24" >T</text>
<text x="466.33" y="241.7" font-family="Liberation Sans" font-weight="400" font-size="21.22" textLength="10.41" lengthAdjust="spacingAndGlyphs" fill="#ee1c24" >a</text>
<text x="477.99 486.51 497.12" y="241.7" font-family="Liberation Sans" font-weight="400" font-size="21.22" fill="#ee1c24" >rg.</text>
<text x="544.52" y="241.7" font-family="Liberation Sans" font-weight="400" font-size="21.22" textLength="11.43" lengthAdjust="spacingAndGlyphs" fill="#1a1ae0" >S</text>
<text x="554.87" y="241.7" font-family="Liberation Sans" font-weight="400" font-size="21.22" textLength="10.69" lengthAdjust="spacingAndGlyphs" fill="#1a1ae0" >a</text>
<text x="565.14" y="241.7" font-family="Liberation Sans" font-weight="400" font-size="21.22" textLength="11.73" lengthAdjust="spacingAndGlyphs" fill="#1a1ae0" >m</text>
<text x="575.26 586.56" y="241.7" font-family="Liberation Sans" font-weight="400" font-size="21.22" fill="#1a1ae0" >p.</text>
<text x="360.52" y="267.9" font-family="Liberation Sans" font-weight="400" font-size="21.08" textLength="12.06" lengthAdjust="spacingAndGlyphs" fill="#111" >E</text>
<text x="371.39" y="267.9" font-family="Liberation Sans" font-weight="400" font-size="21.08" textLength="11.65" lengthAdjust="spacingAndGlyphs" fill="#111" >m</text>
<text x="402.47" y="267.9" font-family="Liberation Sans" font-weight="400" font-size="21.08" textLength="10.61" lengthAdjust="spacingAndGlyphs" fill="#111" >a</text>
<text x="381.69 395.51 413.3" y="267.9" font-family="Liberation Sans" font-weight="400" font-size="21.08" fill="#111" >ul.</text>
<rect x="537.5" y="249.3" width="67.5" height="21.2" fill="#f2202e" />
<line x1="348.5" y1="318.8" x2="348.5" y2="495.1" stroke="#777" stroke-width="1.4" />
<line x1="348.5" y1="494.9" x2="619" y2="494.9" stroke="#777" stroke-width="1.2" />
<line x1="345" y1="494.6" x2="349" y2="494.6" stroke="#666" stroke-width="1" />
<text x="328.02" y="498.3" font-family="Liberation Mono" font-weight="700" font-size="11.23" textLength="6.05" lengthAdjust="spacingAndGlyphs" fill="#222" >0</text>
<text x="338.33" y="498.3" font-family="Liberation Mono" font-weight="700" font-size="11.23" textLength="6.05" lengthAdjust="spacingAndGlyphs" fill="#222" >0</text>
<text x="331.7" y="498.3" font-family="Liberation Mono" font-weight="700" font-size="11.23" fill="#222" >.</text>
<line x1="345" y1="465.38" x2="349" y2="465.38" stroke="#666" stroke-width="1" />
<text x="328.02" y="469.08" font-family="Liberation Mono" font-weight="700" font-size="11.23" textLength="6.05" lengthAdjust="spacingAndGlyphs" fill="#222" >0</text>
<text x="338.29" y="469.08" font-family="Liberation Mono" font-weight="700" font-size="11.23" textLength="6.1" lengthAdjust="spacingAndGlyphs" fill="#222" >2</text>
<text x="331.7" y="469.08" font-family="Liberation Mono" font-weight="700" font-size="11.23" fill="#222" >.</text>
<line x1="345" y1="436.17" x2="349" y2="436.17" stroke="#666" stroke-width="1" />
<text x="328.02" y="439.87" font-family="Liberation Mono" font-weight="700" font-size="11.23" textLength="6.05" lengthAdjust="spacingAndGlyphs" fill="#222" >0</text>
<text x="338.59" y="439.87" font-family="Liberation Mono" font-weight="700" font-size="11.23" textLength="5.48" lengthAdjust="spacingAndGlyphs" fill="#222" >4</text>
<text x="331.7" y="439.87" font-family="Liberation Mono" font-weight="700" font-size="11.23" fill="#222" >.</text>
<line x1="345" y1="406.95" x2="349" y2="406.95" stroke="#666" stroke-width="1" />
<text x="328.02" y="410.65" font-family="Liberation Mono" font-weight="700" font-size="11.23" textLength="6.05" lengthAdjust="spacingAndGlyphs" fill="#222" >0</text>
<text x="338.29" y="410.65" font-family="Liberation Mono" font-weight="700" font-size="11.23" textLength="6.08" lengthAdjust="spacingAndGlyphs" fill="#222" >6</text>
<text x="331.7" y="410.65" font-family="Liberation Mono" font-weight="700" font-size="11.23" fill="#222" >.</text>
<line x1="345" y1="377.73" x2="349" y2="377.73" stroke="#666" stroke-width="1" />
<text x="328.02" y="381.43" font-family="Liberation Mono" font-weight="700" font-size="11.23" textLength="6.05" lengthAdjust="spacingAndGlyphs" fill="#222" >0</text>
<text x="338.38" y="381.43" font-family="Liberation Mono" font-weight="700" font-size="11.23" textLength="5.95" lengthAdjust="spacingAndGlyphs" fill="#222" >8</text>
<text x="331.7" y="381.43" font-family="Liberation Mono" font-weight="700" font-size="11.23" fill="#222" >.</text>
<line x1="345" y1="348.52" x2="349" y2="348.52" stroke="#666" stroke-width="1" />
<text x="327.93" y="352.22" font-family="Liberation Mono" font-weight="700" font-size="11.23" textLength="5.99" lengthAdjust="spacingAndGlyphs" fill="#222" >1</text>
<text x="338.33" y="352.22" font-family="Liberation Mono" font-weight="700" font-size="11.23" textLength="6.05" lengthAdjust="spacingAndGlyphs" fill="#222" >0</text>
<text x="331.7" y="352.22" font-family="Liberation Mono" font-weight="700" font-size="11.23" fill="#222" >.</text>
<line x1="345" y1="319.3" x2="349" y2="319.3" stroke="#666" stroke-width="1" />
<text x="327.93" y="323" font-family="Liberation Mono" font-weight="700" font-size="11.23" textLength="5.99" lengthAdjust="spacingAndGlyphs" fill="#222" >1</text>
<text x="338.29" y="323" font-family="Liberation Mono" font-weight="700" font-size="11.23" textLength="6.1" lengthAdjust="spacingAndGlyphs" fill="#222" >2</text>
<text x="331.7" y="323" font-family="Liberation Mono" font-weight="700" font-size="11.23" fill="#222" >.</text>
<line x1="349" y1="494.6" x2="349" y2="497.6" stroke="#666" stroke-width="1" />
<text x="341.08" y="508.6" font-family="Liberation Mono" font-weight="700" font-size="10.17" textLength="5.48" lengthAdjust="spacingAndGlyphs" fill="#222" >4</text>
<text x="345.98" y="508.6" font-family="Liberation Mono" font-weight="700" font-size="10.17" textLength="6.05" lengthAdjust="spacingAndGlyphs" fill="#222" >0</text>
<text x="351.13" y="508.6" font-family="Liberation Mono" font-weight="700" font-size="10.17" textLength="6.05" lengthAdjust="spacingAndGlyphs" fill="#222" >0</text>
<line x1="382.62" y1="494.6" x2="382.62" y2="497.6" stroke="#666" stroke-width="1" />
<text x="374.71" y="508.6" font-family="Liberation Mono" font-weight="700" font-size="10.17" textLength="5.51" lengthAdjust="spacingAndGlyphs" fill="#222" >4</text>
<text x="379.76" y="508.6" font-family="Liberation Mono" font-weight="700" font-size="10.17" textLength="5.86" lengthAdjust="spacingAndGlyphs" fill="#222" >3</text>
<text x="384.8" y="508.6" font-family="Liberation Mono" font-weight="700" font-size="10.17" fill="#222" >7</text>
<line x1="416.25" y1="494.6" x2="416.25" y2="497.6" stroke="#666" stroke-width="1" />
<text x="408.33" y="508.6" font-family="Liberation Mono" font-weight="700" font-size="10.17" textLength="5.48" lengthAdjust="spacingAndGlyphs" fill="#222" >4</text>
<text x="418.46" y="508.6" font-family="Liberation Mono" font-weight="700" font-size="10.17" textLength="5.9" lengthAdjust="spacingAndGlyphs" fill="#222" >5</text>
<text x="413.21" y="508.6" font-family="Liberation Mono" font-weight="700" font-size="10.17" fill="#222" >7</text>
<line x1="449.88" y1="494.6" x2="449.88" y2="497.6" stroke="#666" stroke-width="1" />
<text x="441.78" y="508.6" font-family="Liberation Mono" font-weight="700" font-size="10.17" textLength="5.9" lengthAdjust="spacingAndGlyphs" fill="#222" >5</text>
<text x="446.75" y="508.6" font-family="Liberation Mono" font-weight="700" font-size="10.17" textLength="5.99" lengthAdjust="spacingAndGlyphs" fill="#222" >1</text>
<text x="451.97" y="508.6" font-family="Liberation Mono" font-weight="700" font-size="10.17" textLength="6.1" lengthAdjust="spacingAndGlyphs" fill="#222" >2</text>
<line x1="483.5" y1="494.6" x2="483.5" y2="497.6" stroke="#666" stroke-width="1" />
<text x="475.4" y="508.6" font-family="Liberation Mono" font-weight="700" font-size="10.17" textLength="5.9" lengthAdjust="spacingAndGlyphs" fill="#222" >5</text>
<text x="480.55" y="508.6" font-family="Liberation Mono" font-weight="700" font-size="10.17" textLength="5.9" lengthAdjust="spacingAndGlyphs" fill="#222" >5</text>
<text x="485.63" y="508.6" font-family="Liberation Mono" font-weight="700" font-size="10.17" textLength="6.05" lengthAdjust="spacingAndGlyphs" fill="#222" >0</text>
<line x1="517.12" y1="494.6" x2="517.12" y2="497.6" stroke="#666" stroke-width="1" />
<text x="509.02" y="508.6" font-family="Liberation Mono" font-weight="700" font-size="10.17" textLength="5.93" lengthAdjust="spacingAndGlyphs" fill="#222" >5</text>
<text x="514.17" y="508.6" font-family="Liberation Mono" font-weight="700" font-size="10.17" textLength="5.98" lengthAdjust="spacingAndGlyphs" fill="#222" >8</text>
<text x="519.3" y="508.6" font-family="Liberation Mono" font-weight="700" font-size="10.17" fill="#222" >7</text>
<line x1="550.75" y1="494.6" x2="550.75" y2="497.6" stroke="#666" stroke-width="1" />
<text x="542.53" y="508.6" font-family="Liberation Mono" font-weight="700" font-size="10.17" textLength="6.08" lengthAdjust="spacingAndGlyphs" fill="#222" >6</text>
<text x="547.69" y="508.6" font-family="Liberation Mono" font-weight="700" font-size="10.17" textLength="6.1" lengthAdjust="spacingAndGlyphs" fill="#222" >2</text>
<text x="552.96" y="508.6" font-family="Liberation Mono" font-weight="700" font-size="10.17" textLength="5.9" lengthAdjust="spacingAndGlyphs" fill="#222" >5</text>
<line x1="584.38" y1="494.6" x2="584.38" y2="497.6" stroke="#666" stroke-width="1" />
<text x="576.16" y="508.6" font-family="Liberation Mono" font-weight="700" font-size="10.17" textLength="6.08" lengthAdjust="spacingAndGlyphs" fill="#222" >6</text>
<text x="581.31" y="508.6" font-family="Liberation Mono" font-weight="700" font-size="10.17" textLength="6.08" lengthAdjust="spacingAndGlyphs" fill="#222" >6</text>
<text x="586.47" y="508.6" font-family="Liberation Mono" font-weight="700" font-size="10.17" textLength="6.1" lengthAdjust="spacingAndGlyphs" fill="#222" >2</text>
<line x1="618" y1="494.6" x2="618" y2="497.6" stroke="#666" stroke-width="1" />
<text x="606.75 613.11 619.48" y="508.6" font-family="Liberation Mono" font-weight="700" font-size="10.17" fill="#222" >700</text>
<text x="624.99" y="508.5" font-family="Liberation Mono" font-weight="700" font-size="9.6" textLength="11.15" lengthAdjust="spacingAndGlyphs" fill="#222" >nm</text>
<line x1="484.5" y1="319.3" x2="484.5" y2="494.6" stroke="#e3b090" stroke-width="1.6" />
<line x1="624.5" y1="319.3" x2="624.5" y2="494.6" stroke="#c8c8c8" stroke-width="1.6" />
<line x1="624.5" y1="381" x2="624.5" y2="488.6" stroke="#e05050" stroke-width="1.8" />
<line x1="624.5" y1="488.6" x2="624.5" y2="494.6" stroke="#40e040" stroke-width="1.8" />
<path d="M349 488.03 L349.9 488.46 L350.79 488.9 L351.69 489.34 L352.59 489.78 L353.48 490.22 L354.38 490.47 L355.28 490.72 L356.17 490.97 L357.07 491.22 L357.97 491.47 L358.86 491.72 L359.76 491.97 L360.66 492.12 L361.55 492.26 L362.45 492.41 L363.35 492.55 L364.24 492.7 L365.14 492.85 L366.04 492.99 L366.93 493.14 L367.83 493.19 L368.73 493.24 L369.62 493.29 L370.52 493.35 L371.42 493.4 L372.31 493.45 L373.21 493.5 L374.11 493.55 L375 493.6 L375.9 493.65 L376.8 493.71 L377.69 493.76 L378.59 493.81 L379.49 493.86 L380.38 493.91 L381.28 493.96 L382.18 494.02 L383.07 494.06 L383.97 494.11 L384.87 494.15 L385.76 494.2 L386.66 494.24 L387.56 494.29 L388.45 494.33 L389.35 494.38 L390.25 494.42 L391.14 494.47 L392.04 494.51 L392.94 494.56 L393.83 494.6 L394.73 494.6 L395.63 494.6 L396.52 494.6 L397.42 494.6 L398.32 494.6 L399.21 494.6 L400.11 494.6 L401.01 494.6 L401.9 494.6 L402.8 494.6 L403.7 494.6 L404.59 494.6 L405.49 494.6 L406.39 494.6 L407.28 494.6 L408.18 494.6 L409.08 494.6 L409.97 494.6 L410.87 494.6 L411.77 494.6 L412.66 494.6 L413.56 494.6 L414.46 494.6 L415.35 494.6 L416.25 494.6 L417.15 494.6 L418.04 494.6 L418.94 494.6 L419.84 494.6 L420.73 494.6 L421.63 494.6 L422.53 494.6 L423.42 494.6 L424.32 494.6 L425.22 494.6 L426.11 494.6 L427.01 494.6 L427.91 494.6 L428.8 494.6 L429.7 494.6 L430.6 494.6 L431.49 494.6 L432.39 494.6 L433.29 494.6 L434.18 494.6 L435.08 494.6 L435.98 494.6 L436.87 494.6 L437.77 494.6 L438.67 494.6 L439.56 494.6 L440.46 494.6 L441.36 494.6 L442.25 494.6 L443.15 494.6 L444.05 494.6 L444.94 494.6 L445.84 494.6 L446.74 494.6 L447.63 494.6 L448.53 494.6 L449.43 494.6 L450.32 494.6 L451.22 494.6 L452.12 494.6 L453.01 494.6 L453.91 494.6 L454.81 494.6 L455.7 494.6 L456.6 494.6 L457.5 494.6 L458.39 494.6 L459.29 494.6 L460.19 494.6 L461.08 494.6 L461.98 494.6 L462.88 494.6 L463.77 494.6 L464.67 494.6 L465.57 494.6 L466.46 494.6 L467.36 494.6 L468.26 494.6 L469.15 494.6 L470.05 494.6 L470.95 494.6 L471.84 494.6 L472.74 494.6 L473.64 494.6 L474.53 494.6 L475.43 494.6 L476.33 494.6 L477.22 494.6 L478.12 494.6 L479.02 494.6 L479.91 494.6 L480.81 494.6 L481.71 494.6 L482.6 494.6 L483.5 494.6 L484.4 494.6 L485.29 494.6 L486.19 494.6 L487.09 494.6 L487.98 494.6 L488.88 494.6 L489.78 494.6 L490.67 494.6 L491.57 494.43 L492.47 494.26 L493.36 494.08 L494.26 493.91 L495.16 493.74 L496.05 493.06 L496.95 492.38 L497.85 491.7 L498.74 491.01 L499.64 489.64 L500.54 488.27 L501.43 486.89 L502.33 485.52 L503.23 483.78 L504.12 481.17 L505.02 478.56 L505.92 475.95 L506.81 472.01 L507.71 468.06 L508.61 464.12 L509.5 460.17 L510.4 455.15 L511.3 450.13 L512.19 445.11 L513.09 440.09 L513.99 435.6 L514.88 431.12 L515.78 426.64 L516.68 422.16 L517.57 417.79 L518.47 413.92 L519.37 410.04 L520.26 406.16 L521.16 402.71 L522.06 399.69 L522.95 396.67 L523.85 393.65 L524.75 391.07 L525.64 388.68 L526.54 386.29 L527.44 383.9 L528.33 381.87 L529.23 380.19 L530.13 378.51 L531.02 376.83 L531.92 375.15 L532.82 373.86 L533.71 372.66 L534.61 371.47 L535.51 370.27 L536.4 369.08 L537.3 368.28 L538.2 367.48 L539.09 366.69 L539.99 365.89 L540.89 365.09 L541.78 364.47 L542.68 363.95 L543.58 363.44 L544.47 362.93 L545.37 362.42 L546.27 361.91 L547.16 361.61 L548.06 361.32 L548.96 361.03 L549.85 360.74 L550.75 360.45 L551.65 360.18 L552.54 360.13 L553.44 360.08 L554.34 360.03 L555.23 359.98 L556.13 359.92 L557.03 359.87 L557.92 359.82 L558.82 359.77 L559.72 359.72 L560.61 359.67 L561.51 359.62 L562.41 359.57 L563.3 359.52 L564.2 359.47 L565.1 359.48 L565.99 359.5 L566.89 359.51 L567.79 359.52 L568.68 359.54 L569.58 359.55 L570.48 359.57 L571.37 359.58 L572.27 359.6 L573.17 359.61 L574.06 359.62 L574.96 359.64 L575.86 359.65 L576.75 359.67 L577.65 359.68 L578.55 359.7 L579.44 359.71 L580.34 359.72 L581.24 359.74 L582.13 359.75 L583.03 359.79 L583.93 359.83 L584.82 359.86 L585.72 359.9 L586.62 359.93 L587.51 359.97 L588.41 360 L589.31 360.04 L590.2 360.08 L591.1 360.11 L592 360.15 L592.89 360.18 L593.79 360.22 L594.69 360.26 L595.58 360.29 L596.48 360.33 L597.38 360.36 L598.27 360.4 L599.17 360.43 L600.07 360.47 L600.96 360.54 L601.86 360.6 L602.76 360.66 L603.65 360.73 L604.55 360.79 L605.45 360.86 L606.34 360.92 L607.24 360.99 L608.14 361.05 L609.03 361.12 L609.93 361.18 L610.83 361.25 L611.72 361.31 L612.62 361.37 L613.52 361.44 L614.41 361.5 L615.31 361.57 L616.21 361.63 L617.1 361.7 L618 361.76" fill="none" stroke="#3030c0" stroke-width="1.3"/>
<line x1="349" y1="348.8" x2="618" y2="348.8" stroke="#d87070" stroke-width="1.5" />
<rect x="390.8" y="347.6" width="1.6" height="2.6" fill="#fff" />
<text x="351.72" y="287.1" font-family="Liberation Mono" font-weight="700" font-size="11.69" textLength="5.65" lengthAdjust="spacingAndGlyphs" fill="#d43030" stroke="#d43030" stroke-width="0.3">T</text>
<text x="362.2" y="287.1" font-family="Liberation Mono" font-weight="700" font-size="11.69" textLength="5.83" lengthAdjust="spacingAndGlyphs" fill="#d43030" stroke="#d43030" stroke-width="0.3">a</text>
<text x="367.35" y="287.1" font-family="Liberation Mono" font-weight="700" font-size="11.69" textLength="6.45" lengthAdjust="spacingAndGlyphs" fill="#d43030" stroke="#d43030" stroke-width="0.3">n</text>
<text x="372.79" y="287.1" font-family="Liberation Mono" font-weight="700" font-size="11.69" textLength="6.36" lengthAdjust="spacingAndGlyphs" fill="#d43030" stroke="#d43030" stroke-width="0.3">s</text>
<text x="378.44" y="287.1" font-family="Liberation Mono" font-weight="700" font-size="11.69" textLength="5.76" lengthAdjust="spacingAndGlyphs" fill="#d43030" stroke="#d43030" stroke-width="0.3">m</text>
<text x="383.54" y="287.1" font-family="Liberation Mono" font-weight="700" font-size="11.69" textLength="6.07" lengthAdjust="spacingAndGlyphs" fill="#d43030" stroke="#d43030" stroke-width="0.3">i</text>
<text x="399.67" y="287.1" font-family="Liberation Mono" font-weight="700" font-size="11.69" textLength="5.83" lengthAdjust="spacingAndGlyphs" fill="#d43030" stroke="#d43030" stroke-width="0.3">a</text>
<text x="404.82" y="287.1" font-family="Liberation Mono" font-weight="700" font-size="11.69" textLength="6.45" lengthAdjust="spacingAndGlyphs" fill="#d43030" stroke="#d43030" stroke-width="0.3">n</text>
<text x="410.32" y="287.1" font-family="Liberation Mono" font-weight="700" font-size="11.69" textLength="6.26" lengthAdjust="spacingAndGlyphs" fill="#d43030" stroke="#d43030" stroke-width="0.3">c</text>
<text x="415.74" y="287.1" font-family="Liberation Mono" font-weight="700" font-size="11.69" textLength="6.07" lengthAdjust="spacingAndGlyphs" fill="#d43030" stroke="#d43030" stroke-width="0.3">e</text>
<text x="426.94" y="287.1" font-family="Liberation Mono" font-weight="700" font-size="11.69" textLength="5.08" lengthAdjust="spacingAndGlyphs" fill="#d43030" stroke="#d43030" stroke-width="0.3">%</text>
<text x="442.3" y="287.1" font-family="Liberation Mono" font-weight="700" font-size="11.69" textLength="6.23" lengthAdjust="spacingAndGlyphs" fill="#d43030" stroke="#d43030" stroke-width="0.3">1</text>
<text x="447.76" y="287.1" font-family="Liberation Mono" font-weight="700" font-size="11.69" textLength="6.29" lengthAdjust="spacingAndGlyphs" fill="#d43030" stroke="#d43030" stroke-width="0.3">0</text>
<text x="453.11" y="287.1" font-family="Liberation Mono" font-weight="700" font-size="11.69" textLength="6.29" lengthAdjust="spacingAndGlyphs" fill="#d43030" stroke="#d43030" stroke-width="0.3">0</text>
<text x="463.82" y="287.1" font-family="Liberation Mono" font-weight="700" font-size="11.69" textLength="6.29" lengthAdjust="spacingAndGlyphs" fill="#d43030" stroke="#d43030" stroke-width="0.3">0</text>
<text x="356.25 388.6 393.95 420.52 431.44 436.68 456.92" y="287.1" font-family="Liberation Mono" font-weight="700" font-size="11.69" fill="#d43030" stroke="#d43030" stroke-width="0.3">rtt():.</text>
<text x="351.72" y="301.4" font-family="Liberation Mono" font-weight="700" font-size="11.69" textLength="5.66" lengthAdjust="spacingAndGlyphs" fill="#3a3ad0" stroke="#3a3ad0" stroke-width="0.3">T</text>
<text x="362.22" y="301.4" font-family="Liberation Mono" font-weight="700" font-size="11.69" textLength="5.84" lengthAdjust="spacingAndGlyphs" fill="#3a3ad0" stroke="#3a3ad0" stroke-width="0.3">a</text>
<text x="367.38" y="301.4" font-family="Liberation Mono" font-weight="700" font-size="11.69" textLength="6.46" lengthAdjust="spacingAndGlyphs" fill="#3a3ad0" stroke="#3a3ad0" stroke-width="0.3">n</text>
<text x="372.83" y="301.4" font-family="Liberation Mono" font-weight="700" font-size="11.69" textLength="6.37" lengthAdjust="spacingAndGlyphs" fill="#3a3ad0" stroke="#3a3ad0" stroke-width="0.3">s</text>
<text x="378.49" y="301.4" font-family="Liberation Mono" font-weight="700" font-size="11.69" textLength="5.77" lengthAdjust="spacingAndGlyphs" fill="#3a3ad0" stroke="#3a3ad0" stroke-width="0.3">m</text>
<text x="383.6" y="301.4" font-family="Liberation Mono" font-weight="700" font-size="11.69" textLength="6.09" lengthAdjust="spacingAndGlyphs" fill="#3a3ad0" stroke="#3a3ad0" stroke-width="0.3">i</text>
<text x="399.77" y="301.4" font-family="Liberation Mono" font-weight="700" font-size="11.69" textLength="5.84" lengthAdjust="spacingAndGlyphs" fill="#3a3ad0" stroke="#3a3ad0" stroke-width="0.3">a</text>
<text x="404.92" y="301.4" font-family="Liberation Mono" font-weight="700" font-size="11.69" textLength="6.46" lengthAdjust="spacingAndGlyphs" fill="#3a3ad0" stroke="#3a3ad0" stroke-width="0.3">n</text>
<text x="410.44" y="301.4" font-family="Liberation Mono" font-weight="700" font-size="11.69" textLength="6.27" lengthAdjust="spacingAndGlyphs" fill="#3a3ad0" stroke="#3a3ad0" stroke-width="0.3">c</text>
<text x="415.87" y="301.4" font-family="Liberation Mono" font-weight="700" font-size="11.69" textLength="6.09" lengthAdjust="spacingAndGlyphs" fill="#3a3ad0" stroke="#3a3ad0" stroke-width="0.3">e</text>
<text x="427.09" y="301.4" font-family="Liberation Mono" font-weight="700" font-size="11.69" textLength="5.09" lengthAdjust="spacingAndGlyphs" fill="#3a3ad0" stroke="#3a3ad0" stroke-width="0.3">%</text>
<text x="442.58" y="301.4" font-family="Liberation Mono" font-weight="700" font-size="11.69" textLength="6.3" lengthAdjust="spacingAndGlyphs" fill="#3a3ad0" stroke="#3a3ad0" stroke-width="0.3">0</text>
<text x="453.57" y="301.4" font-family="Liberation Mono" font-weight="700" font-size="11.69" textLength="5.71" lengthAdjust="spacingAndGlyphs" fill="#3a3ad0" stroke="#3a3ad0" stroke-width="0.3">4</text>
<text x="356.26 388.68 394.04 420.66 431.6 436.85 446.4" y="301.4" font-family="Liberation Mono" font-weight="700" font-size="11.69" fill="#3a3ad0" stroke="#3a3ad0" stroke-width="0.3">rtt():.</text>
<text x="351.5" y="315.1" font-family="Liberation Mono" font-weight="700" font-size="11.69" textLength="5.12" lengthAdjust="spacingAndGlyphs" fill="#222" stroke="#222" stroke-width="0.3">W</text>
<text x="356.38" y="315.1" font-family="Liberation Mono" font-weight="700" font-size="11.69" textLength="5.87" lengthAdjust="spacingAndGlyphs" fill="#222" stroke="#222" stroke-width="0.3">a</text>
<text x="362.14" y="315.1" font-family="Liberation Mono" font-weight="700" font-size="11.69" textLength="5.41" lengthAdjust="spacingAndGlyphs" fill="#222" stroke="#222" stroke-width="0.3">v</text>
<text x="367.17" y="315.1" font-family="Liberation Mono" font-weight="700" font-size="11.69" textLength="6.11" lengthAdjust="spacingAndGlyphs" fill="#222" stroke="#222" stroke-width="0.3">e</text>
<text x="371.82" y="315.1" font-family="Liberation Mono" font-weight="700" font-size="11.69" textLength="6.81" lengthAdjust="spacingAndGlyphs" fill="#222" stroke="#222" stroke-width="0.3">l</text>
<text x="377.94" y="315.1" font-family="Liberation Mono" font-weight="700" font-size="11.69" textLength="6.11" lengthAdjust="spacingAndGlyphs" fill="#222" stroke="#222" stroke-width="0.3">e</text>
<text x="383.12" y="315.1" font-family="Liberation Mono" font-weight="700" font-size="11.69" textLength="6.49" lengthAdjust="spacingAndGlyphs" fill="#222" stroke="#222" stroke-width="0.3">n</text>
<text x="388.58" y="315.1" font-family="Liberation Mono" font-weight="700" font-size="11.69" textLength="6.35" lengthAdjust="spacingAndGlyphs" fill="#222" stroke="#222" stroke-width="0.3">g</text>
<text x="399.23" y="315.1" font-family="Liberation Mono" font-weight="700" font-size="11.69" textLength="6.55" lengthAdjust="spacingAndGlyphs" fill="#222" stroke="#222" stroke-width="0.3">h</text>
<text x="410.06" y="315.1" font-family="Liberation Mono" font-weight="700" font-size="11.69" textLength="6.49" lengthAdjust="spacingAndGlyphs" fill="#222" stroke="#222" stroke-width="0.3">n</text>
<text x="415.84" y="315.1" font-family="Liberation Mono" font-weight="700" font-size="11.69" textLength="5.8" lengthAdjust="spacingAndGlyphs" fill="#222" stroke="#222" stroke-width="0.3">m</text>
<text x="431.8" y="315.1" font-family="Liberation Mono" font-weight="700" font-size="11.69" textLength="6.17" lengthAdjust="spacingAndGlyphs" fill="#222" stroke="#222" stroke-width="0.3">5</text>
<text x="437.19" y="315.1" font-family="Liberation Mono" font-weight="700" font-size="11.69" textLength="6.17" lengthAdjust="spacingAndGlyphs" fill="#222" stroke="#222" stroke-width="0.3">5</text>
<text x="442.5" y="315.1" font-family="Liberation Mono" font-weight="700" font-size="11.69" textLength="6.33" lengthAdjust="spacingAndGlyphs" fill="#222" stroke="#222" stroke-width="0.3">0</text>
<text x="453.28" y="315.1" font-family="Liberation Mono" font-weight="700" font-size="11.69" textLength="6.33" lengthAdjust="spacingAndGlyphs" fill="#222" stroke="#222" stroke-width="0.3">0</text>
<text x="393.75 404.33 420.71 425.99 446.36" y="315.1" font-family="Liberation Mono" font-weight="700" font-size="11.69" fill="#222" stroke="#222" stroke-width="0.3">t():.</text>
<line x1="569.5" y1="287.5" x2="590" y2="287.5" stroke="#e02020" stroke-width="1.2" />
<text x="590.2" y="294.2" font-family="Liberation Sans" font-weight="400" font-size="18.31" textLength="8.17" lengthAdjust="spacingAndGlyphs" fill="#e02020" >T</text>
<text x="597.84" y="294.2" font-family="Liberation Sans" font-weight="400" font-size="18.31" textLength="8.19" lengthAdjust="spacingAndGlyphs" fill="#e02020" >a</text>
<text x="613.68" y="294.2" font-family="Liberation Sans" font-weight="400" font-size="18.31" textLength="9.35" lengthAdjust="spacingAndGlyphs" fill="#e02020" >g</text>
<text x="606.7 621.83" y="294.2" font-family="Liberation Sans" font-weight="400" font-size="18.31" fill="#e02020" >r.</text>
<line x1="569.5" y1="305" x2="590" y2="305" stroke="#2020c0" stroke-width="1.2" />
<text x="589.9" y="311.4" font-family="Liberation Sans" font-weight="400" font-size="17.88" textLength="8.77" lengthAdjust="spacingAndGlyphs" fill="#2020c0" >S</text>
<text x="597.84" y="311.4" font-family="Liberation Sans" font-weight="400" font-size="17.88" textLength="8.19" lengthAdjust="spacingAndGlyphs" fill="#2020c0" >a</text>
<text x="605.72" y="311.4" font-family="Liberation Sans" font-weight="400" font-size="17.88" textLength="9" lengthAdjust="spacingAndGlyphs" fill="#2020c0" >m</text>
<text x="613.31" y="311.4" font-family="Liberation Sans" font-weight="400" font-size="17.88" textLength="9.36" lengthAdjust="spacingAndGlyphs" fill="#2020c0" >p</text>
<text x="621.91" y="311.4" font-family="Liberation Sans" font-weight="400" font-size="17.88" fill="#2020c0" >.</text>
<rect x="349.9" y="513.4" width="269.5" height="10.5" fill="url(#specbar)" />
<rect x="322" y="531" width="323" height="30.4" fill="#3aa2f2" />
<text x="327.7" y="548.7" font-family="Liberation Sans" font-weight="400" font-size="17.88" textLength="8.18" lengthAdjust="spacingAndGlyphs" fill="#f4f4f4" >T</text>
<text x="335.29" y="548.7" font-family="Liberation Sans" font-weight="400" font-size="17.88" textLength="8.98" lengthAdjust="spacingAndGlyphs" fill="#f4f4f4" >e</text>
<text x="343.46" y="548.7" font-family="Liberation Sans" font-weight="400" font-size="17.88" textLength="8.68" lengthAdjust="spacingAndGlyphs" fill="#f4f4f4" >s</text>
<text x="367.26" y="548.7" font-family="Liberation Sans" font-weight="400" font-size="17.88" textLength="8.77" lengthAdjust="spacingAndGlyphs" fill="#f4f4f4" >S</text>
<text x="383.13" y="548.7" font-family="Liberation Sans" font-weight="400" font-size="17.88" textLength="8.92" lengthAdjust="spacingAndGlyphs" fill="#f4f4f4" >o</text>
<text x="390.69" y="548.7" font-family="Liberation Sans" font-weight="400" font-size="17.88" textLength="9.37" lengthAdjust="spacingAndGlyphs" fill="#f4f4f4" >p</text>
<text x="353.15 377.07 401.06" y="548.7" font-family="Liberation Sans" font-weight="400" font-size="17.88" fill="#f4f4f4" >tt!</text>
<rect x="521" y="533.6" width="72.5" height="16.4" fill="#fffffa" stroke="#2a4cc0" stroke-width="1.3"/>
<text x="521.5" y="548.8" font-family="Liberation Sans" font-weight="400" font-size="19.04" textLength="8.03" lengthAdjust="spacingAndGlyphs" fill="#111" >T</text>
<text x="537.11" y="548.8" font-family="Liberation Sans" font-weight="400" font-size="19.04" textLength="8.2" lengthAdjust="spacingAndGlyphs" fill="#111" >4</text>
<text x="544.67" y="548.8" font-family="Liberation Sans" font-weight="400" font-size="19.04" textLength="8.72" lengthAdjust="spacingAndGlyphs" fill="#111" >3</text>
<text x="560.31" y="548.8" font-family="Liberation Sans" font-weight="400" font-size="19.04" textLength="8.65" lengthAdjust="spacingAndGlyphs" fill="#111" >0</text>
<text x="568.04" y="548.8" font-family="Liberation Sans" font-weight="400" font-size="19.04" textLength="8.84" lengthAdjust="spacingAndGlyphs" fill="#111" >m</text>
<text x="576.09" y="548.8" font-family="Liberation Sans" font-weight="400" font-size="19.04" textLength="8.52" lengthAdjust="spacingAndGlyphs" fill="#111" >s</text>
<text x="530.7 552.45" y="548.8" font-family="Liberation Sans" font-weight="400" font-size="19.04" fill="#111" >:.</text>
<rect x="599" y="533.6" width="32.9" height="16.4" fill="#fffffa" stroke="#2a4cc0" stroke-width="1.3"/>
<text x="597.97" y="548.8" font-family="Liberation Sans" font-weight="400" font-size="19.04" textLength="9.68" lengthAdjust="spacingAndGlyphs" fill="#ee1111" >L</text>
<text x="606.79" y="548.8" font-family="Liberation Sans" font-weight="400" font-size="19.04" textLength="9.04" lengthAdjust="spacingAndGlyphs" fill="#ee1111" >o</text>
<text x="614.8" y="548.8" font-family="Liberation Sans" font-weight="400" font-size="19.04" textLength="8.9" lengthAdjust="spacingAndGlyphs" fill="#ee1111" >c</text>
<text x="622.44" y="548.8" font-family="Liberation Sans" font-weight="400" font-size="19.04" textLength="8.84" lengthAdjust="spacingAndGlyphs" fill="#ee1111" >k</text>
<rect x="327" y="552.7" width="312.4" height="4.4" fill="#ffffff" />
<rect x="322" y="561.4" width="323" height="41.4" fill="url(#tb)" />
<g transform="translate(0,-2.1)">
<path d="M347.7 571.8 L360.9 578.2 L347.7 584.6 Z" fill="#7ee41e" stroke="#7ee41e" stroke-width="1.6" stroke-linejoin="round"/>
<path d="M411.1 571.8 L422.1 578.2 L411.1 584.6 Z" fill="#7ee41e" stroke="#7ee41e" stroke-width="1.6" stroke-linejoin="round"/>
<rect x="421.5" y="571" width="5.6" height="14.5" fill="#7ee41e" rx="1.2"/>
<rect x="476.5" y="570.8" width="14" height="14.6" fill="#a9a9a9" rx="1.8"/>
<rect x="540.5" y="569.8" width="15.1" height="15.5" fill="#7ee41e" rx="2"/>
<rect x="543.3" y="571.4" width="9.4" height="4.2" fill="#1e1e1e" />
<rect x="544.1" y="573.6" width="7" height="1" fill="#7ee41e" />
<rect x="550.5" y="571.9" width="1.4" height="1.4" fill="#7ee41e" />
<rect x="542.9" y="578.2" width="10.4" height="5.8" fill="#1e1e1e" />
<rect x="544.1" y="580" width="8" height="3.4" fill="#7ee41e" />
<path d="M603.7 584.6 V572.6 H608.9 L610.5 574.4 H619.5 V578.4" fill="none" stroke="#7ee41e" stroke-width="1.5" stroke-linejoin="round"/>
<path d="M603.5 585.2 L606.7 578.6 H622.7 L619.7 585.2 Z" fill="#1e1e1e" stroke="#7ee41e" stroke-width="1.5" stroke-linejoin="round"/>
<path d="M604.3 585.2 L605.9 581.6 H621.3 L619.7 585.2 Z" fill="#7ee41e"/>
<circle cx="615.3" cy="570.4" r="1.1" fill="#7ee41e"/><circle cx="618.5" cy="572.0" r="1.2" fill="#7ee41e"/>
<text x="340.29" y="600.9" font-family="Liberation Sans" font-weight="700" font-size="11.34" textLength="5.53" lengthAdjust="spacingAndGlyphs" fill="#7ee41e" >C</text>
<text x="345.6" y="600.9" font-family="Liberation Sans" font-weight="700" font-size="11.34" textLength="5.23" lengthAdjust="spacingAndGlyphs" fill="#7ee41e" >a</text>
<text x="352.08 357.36 361.47" y="600.9" font-family="Liberation Sans" font-weight="700" font-size="11.34" fill="#7ee41e" >li.</text>
<text x="405.64" y="600.9" font-family="Liberation Sans" font-weight="700" font-size="11.34" textLength="5.77" lengthAdjust="spacingAndGlyphs" fill="#7ee41e" >M</text>
<text x="410.8" y="600.9" font-family="Liberation Sans" font-weight="700" font-size="11.34" textLength="5.57" lengthAdjust="spacingAndGlyphs" fill="#7ee41e" >e</text>
<text x="416.02" y="600.9" font-family="Liberation Sans" font-weight="700" font-size="11.34" textLength="5.05" lengthAdjust="spacingAndGlyphs" fill="#7ee41e" >a</text>
<text x="421.03" y="600.9" font-family="Liberation Sans" font-weight="700" font-size="11.34" textLength="5.61" lengthAdjust="spacingAndGlyphs" fill="#7ee41e" >s</text>
<text x="426.21" y="600.9" font-family="Liberation Sans" font-weight="700" font-size="11.34" fill="#7ee41e" >.</text>
<text x="472.76" y="600.9" font-family="Liberation Sans" font-weight="700" font-size="11.34" textLength="5.62" lengthAdjust="spacingAndGlyphs" fill="#9a9a9a" >S</text>
<text x="483.26" y="600.9" font-family="Liberation Sans" font-weight="700" font-size="11.34" textLength="5.79" lengthAdjust="spacingAndGlyphs" fill="#9a9a9a" >o</text>
<text x="488.29" y="600.9" font-family="Liberation Sans" font-weight="700" font-size="11.34" textLength="6.12" lengthAdjust="spacingAndGlyphs" fill="#9a9a9a" >p</text>
<text x="478.95" y="600.9" font-family="Liberation Sans" font-weight="700" font-size="11.34" fill="#9a9a9a" >t</text>
<text x="536.95" y="600.9" font-family="Liberation Sans" font-weight="700" font-size="11.34" textLength="5.84" lengthAdjust="spacingAndGlyphs" fill="#7ee41e" >S</text>
<text x="542.43" y="600.9" font-family="Liberation Sans" font-weight="700" font-size="11.34" textLength="5.47" lengthAdjust="spacingAndGlyphs" fill="#7ee41e" >a</text>
<text x="548.2" y="600.9" font-family="Liberation Sans" font-weight="700" font-size="11.34" textLength="5.32" lengthAdjust="spacingAndGlyphs" fill="#7ee41e" >v</text>
<text x="553.33" y="600.9" font-family="Liberation Sans" font-weight="700" font-size="11.34" textLength="6.04" lengthAdjust="spacingAndGlyphs" fill="#7ee41e" >e</text>
<text x="601.23" y="600.9" font-family="Liberation Sans" font-weight="700" font-size="11.34" textLength="6" lengthAdjust="spacingAndGlyphs" fill="#7ee41e" >O</text>
<text x="606.49" y="600.9" font-family="Liberation Sans" font-weight="700" font-size="11.34" textLength="6.5" lengthAdjust="spacingAndGlyphs" fill="#7ee41e" >p</text>
<text x="612.41" y="600.9" font-family="Liberation Sans" font-weight="700" font-size="11.34" textLength="6.18" lengthAdjust="spacingAndGlyphs" fill="#7ee41e" >e</text>
<text x="617.75" y="600.9" font-family="Liberation Sans" font-weight="700" font-size="11.34" textLength="6.78" lengthAdjust="spacingAndGlyphs" fill="#7ee41e" >n</text>
</g>
<line x1="692" y1="63.1" x2="692" y2="242.8" stroke="#505050" stroke-width="1.3" />
<line x1="759.4" y1="63.1" x2="759.4" y2="242.8" stroke="#505050" stroke-width="1.3" />
<line x1="827.4" y1="63.1" x2="827.4" y2="242.8" stroke="#505050" stroke-width="1.3" />
<line x1="895.3" y1="63.1" x2="895.3" y2="242.8" stroke="#505050" stroke-width="1.3" />
<line x1="646.6" y1="94.1" x2="963" y2="94.1" stroke="#505050" stroke-width="1.3" />
<line x1="646.6" y1="126.2" x2="963" y2="126.2" stroke="#505050" stroke-width="1.3" />
<line x1="646.6" y1="157.8" x2="963" y2="157.8" stroke="#505050" stroke-width="1.3" />
<line x1="646.6" y1="211.9" x2="963" y2="211.9" stroke="#505050" stroke-width="1.3" />
<rect x="646.6" y="63.1" width="316.4" height="462.9" fill="none" stroke="#505050" stroke-width="1.3"/>
<line x1="646.6" y1="242.8" x2="963" y2="242.8" stroke="#505050" stroke-width="1.3" />
<path d="M731.05 71.3L731.05 82.25M726.31 74.04L735.79 79.51M735.79 74.04L726.31 79.51" stroke="#111" stroke-width="1.66" fill="none"/>
<text x="712.19" y="86.2" font-family="Liberation Sans" font-weight="400" font-size="22.09" fill="#111" >L</text>
<text x="781.09" y="86.2" font-family="Liberation Sans" font-weight="400" font-size="22.09" textLength="11.89" lengthAdjust="spacingAndGlyphs" fill="#111" >a</text>
<path d="M799.05 71.3L799.05 82.25M794.31 74.04L803.79 79.51M803.79 74.04L794.31 79.51" stroke="#111" stroke-width="1.66" fill="none"/>
<path d="M867.05 71.3L867.05 82.25M862.31 74.04L871.79 79.51M871.79 74.04L862.31 79.51" stroke="#111" stroke-width="1.66" fill="none"/>
<text x="848.58" y="86.2" font-family="Liberation Sans" font-weight="400" font-size="22.09" fill="#111" >b</text>
<text x="895.5" y="86.2" font-family="Liberation Sans" font-weight="400" font-size="22.09" textLength="12.16" lengthAdjust="spacingAndGlyphs" fill="#111" >E</text>
<text x="906.46" y="86.2" font-family="Liberation Sans" font-weight="400" font-size="22.09" textLength="11.75" lengthAdjust="spacingAndGlyphs" fill="#111" >m</text>
<text x="937.79" y="86.2" font-family="Liberation Sans" font-weight="400" font-size="22.09" textLength="10.7" lengthAdjust="spacingAndGlyphs" fill="#111" >a</text>
<text x="916.62 930.69 948.59" y="86.2" font-family="Liberation Sans" font-weight="400" font-size="22.09" fill="#111" >ul.</text>
<text x="648.13" y="117.7" font-family="Liberation Sans" font-weight="400" font-size="21.66" textLength="10.15" lengthAdjust="spacingAndGlyphs" fill="#111" >T</text>
<text x="657.62" y="117.7" font-family="Liberation Sans" font-weight="400" font-size="21.66" textLength="10.18" lengthAdjust="spacingAndGlyphs" fill="#111" >a</text>
<text x="677.3" y="117.7" font-family="Liberation Sans" font-weight="400" font-size="21.66" textLength="11.62" lengthAdjust="spacingAndGlyphs" fill="#111" >g</text>
<text x="668.84 687.58" y="117.7" font-family="Liberation Sans" font-weight="400" font-size="21.66" fill="#111" >r.</text>
<text x="709.01" y="117.7" font-family="Liberation Sans" font-weight="400" font-size="21.66" textLength="11.47" lengthAdjust="spacingAndGlyphs" fill="#e01818" >0</text>
<text x="719.39" y="117.7" font-family="Liberation Sans" font-weight="400" font-size="21.66" textLength="11.47" lengthAdjust="spacingAndGlyphs" fill="#e01818" >0</text>
<text x="740.14" y="117.7" font-family="Liberation Sans" font-weight="400" font-size="21.66" textLength="11.47" lengthAdjust="spacingAndGlyphs" fill="#e01818" >0</text>
<text x="698.05 730.2" y="117.7" font-family="Liberation Sans" font-weight="400" font-size="21.66" fill="#e01818" >1.</text>
<text x="771.17" y="117.7" font-family="Liberation Sans" font-weight="400" font-size="21.66" textLength="11.84" lengthAdjust="spacingAndGlyphs" fill="#e01818" >0</text>
<text x="792.59" y="117.7" font-family="Liberation Sans" font-weight="400" font-size="21.66" textLength="11.84" lengthAdjust="spacingAndGlyphs" fill="#e01818" >0</text>
<text x="803.3" y="117.7" font-family="Liberation Sans" font-weight="400" font-size="21.66" textLength="11.84" lengthAdjust="spacingAndGlyphs" fill="#e01818" >0</text>
<text x="782.43" y="117.7" font-family="Liberation Sans" font-weight="400" font-size="21.66" fill="#e01818" >.</text>
<text x="839.17" y="117.7" font-family="Liberation Sans" font-weight="400" font-size="21.66" textLength="11.81" lengthAdjust="spacingAndGlyphs" fill="#e01818" >0</text>
<text x="860.54" y="117.7" font-family="Liberation Sans" font-weight="400" font-size="21.66" textLength="11.81" lengthAdjust="spacingAndGlyphs" fill="#e01818" >0</text>
<text x="871.22" y="117.7" font-family="Liberation Sans" font-weight="400" font-size="21.66" textLength="11.81" lengthAdjust="spacingAndGlyphs" fill="#e01818" >0</text>
<text x="850.4" y="117.7" font-family="Liberation Sans" font-weight="400" font-size="21.66" fill="#e01818" >.</text>
<text x="647.28" y="149" font-family="Liberation Sans" font-weight="400" font-size="21.22" textLength="10.57" lengthAdjust="spacingAndGlyphs" fill="#111" >S</text>
<text x="656.85" y="149" font-family="Liberation Sans" font-weight="400" font-size="21.22" textLength="9.88" lengthAdjust="spacingAndGlyphs" fill="#111" >a</text>
<text x="666.35" y="149" font-family="Liberation Sans" font-weight="400" font-size="21.22" textLength="10.85" lengthAdjust="spacingAndGlyphs" fill="#111" >m</text>
<text x="675.51" y="149" font-family="Liberation Sans" font-weight="400" font-size="21.22" textLength="11.29" lengthAdjust="spacingAndGlyphs" fill="#111" >p</text>
<text x="685.93" y="149" font-family="Liberation Sans" font-weight="400" font-size="21.22" fill="#111" >.</text>
<text x="729.83" y="149" font-family="Liberation Sans" font-weight="400" font-size="21.22" textLength="11.32" lengthAdjust="spacingAndGlyphs" fill="#1a1ae0" >4</text>
<text x="697.15 707.93 719.31 740.33" y="149" font-family="Liberation Sans" font-weight="400" font-size="21.22" fill="#1a1ae0" >52.0</text>
<text x="776.84" y="149" font-family="Liberation Sans" font-weight="400" font-size="21.22" textLength="11.72" lengthAdjust="spacingAndGlyphs" fill="#1a1ae0" >3</text>
<text x="808.39" y="149" font-family="Liberation Sans" font-weight="400" font-size="21.22" textLength="11.63" lengthAdjust="spacingAndGlyphs" fill="#1a1ae0" >0</text>
<text x="766.21 787.9 797.78" y="149" font-family="Liberation Sans" font-weight="400" font-size="21.22" fill="#1a1ae0" >7.2</text>
<text x="833.08 843.87 855.23 865.44 876.23" y="149" font-family="Liberation Sans" font-weight="400" font-size="21.22" fill="#1a1ae0" >82.90</text>
<rect x="905.7" y="129.9" width="53.1" height="23.5" fill="#f2202e" />
<text x="647.31" y="192.1" font-family="Liberation Sans" font-weight="400" font-size="22.09" textLength="9.79" lengthAdjust="spacingAndGlyphs" fill="#111" >C</text>
<text x="655.63" y="192.1" font-family="Liberation Sans" font-weight="400" font-size="22.09" textLength="11.32" lengthAdjust="spacingAndGlyphs" fill="#111" >h</text>
<text x="674.35" y="192.1" font-family="Liberation Sans" font-weight="400" font-size="22.09" textLength="10.11" lengthAdjust="spacingAndGlyphs" fill="#111" >o</text>
<text x="666.14 683.39" y="192.1" font-family="Liberation Sans" font-weight="400" font-size="22.09" fill="#111" >r.</text>
<text x="703.36" y="180.3" font-family="Liberation Sans" font-weight="400" font-size="23.55" textLength="14.39" lengthAdjust="spacingAndGlyphs" fill="#111" >Δ</text>
<path d="M741.5 166L741.5 176.8M736.83 168.7L746.18 174.1M746.18 168.7L736.83 174.1" stroke="#111" stroke-width="1.64" fill="none"/>
<text x="723.11" y="180.7" font-family="Liberation Sans" font-weight="400" font-size="21.8" fill="#111" >L</text>
<text x="771.66" y="180.3" font-family="Liberation Sans" font-weight="400" font-size="23.55" textLength="14.39" lengthAdjust="spacingAndGlyphs" fill="#111" >Δ</text>
<text x="791.59" y="180.7" font-family="Liberation Sans" font-weight="400" font-size="21.8" textLength="11.93" lengthAdjust="spacingAndGlyphs" fill="#111" >a</text>
<path d="M809.6 166L809.6 176.8M804.93 168.7L814.28 174.1M814.28 168.7L804.93 174.1" stroke="#111" stroke-width="1.64" fill="none"/>
<text x="839.56" y="180.3" font-family="Liberation Sans" font-weight="400" font-size="23.55" textLength="14.39" lengthAdjust="spacingAndGlyphs" fill="#111" >Δ</text>
<path d="M877.1 166L877.1 176.8M872.43 168.7L881.78 174.1M881.78 168.7L872.43 174.1" stroke="#111" stroke-width="1.64" fill="none"/>
<text x="859.09" y="180.7" font-family="Liberation Sans" font-weight="400" font-size="21.8" fill="#111" >b</text>
<text x="896.36" y="180.3" font-family="Liberation Sans" font-weight="400" font-size="23.55" textLength="14.39" lengthAdjust="spacingAndGlyphs" fill="#111" >Δ</text>
<text x="914.95" y="180.7" font-family="Liberation Sans" font-weight="400" font-size="21.8" textLength="12.58" lengthAdjust="spacingAndGlyphs" fill="#111" >E</text>
<path d="M932.37 166L932.37 176.8M927.7 168.7L937.05 174.1M937.05 168.7L927.7 174.1" stroke="#111" stroke-width="1.64" fill="none"/>
<text x="937.18" y="180.7" font-family="Liberation Sans" font-weight="400" font-size="21.8" textLength="11.07" lengthAdjust="spacingAndGlyphs" fill="#111" >a</text>
<text x="947.59" y="180.7" font-family="Liberation Sans" font-weight="400" font-size="21.8" fill="#111" >b</text>
<text x="693.2" y="203.2" font-family="Liberation Sans" font-weight="400" font-size="20.93" textLength="9.96" lengthAdjust="spacingAndGlyphs" fill="#111" >–</text>
<text x="703.22" y="203.2" font-family="Liberation Sans" font-weight="400" font-size="20.93" textLength="10.98" lengthAdjust="spacingAndGlyphs" fill="#111" >4</text>
<text x="744.74" y="203.2" font-family="Liberation Sans" font-weight="400" font-size="20.93" textLength="11.57" lengthAdjust="spacingAndGlyphs" fill="#111" >0</text>
<text x="713.28 724.37 734.16" y="203.2" font-family="Liberation Sans" font-weight="400" font-size="20.93" fill="#111" >7.6</text>
<text x="766.23 776.83 787.9 797.84 808.38" y="203.2" font-family="Liberation Sans" font-weight="400" font-size="20.93" fill="#111" >73.20</text>
<text x="833.09 843.79 855.04 865.19 875.88" y="203.2" font-family="Liberation Sans" font-weight="400" font-size="20.93" fill="#111" >82.90</text>
<text x="943.38" y="203.2" font-family="Liberation Sans" font-weight="400" font-size="20.93" textLength="11.1" lengthAdjust="spacingAndGlyphs" fill="#111" >4</text>
<text x="900.41 911.28 921.87 933.04" y="203.2" font-family="Liberation Sans" font-weight="400" font-size="20.93" fill="#111" >120.</text>
<text x="647.66 657.3 668.4 679.28" y="234.6" font-family="Liberation Sans" font-weight="400" font-size="21.8" fill="#111" >Judg</text>
<text x="701.59" y="234.6" font-family="Liberation Sans" font-weight="400" font-size="21.8" textLength="12.42" lengthAdjust="spacingAndGlyphs" fill="#e01818" >D</text>
<text x="712.88" y="234.6" font-family="Liberation Sans" font-weight="400" font-size="21.8" textLength="11.03" lengthAdjust="spacingAndGlyphs" fill="#e01818" >a</text>
<text x="725.37 734.07" y="234.6" font-family="Liberation Sans" font-weight="400" font-size="21.8" fill="#e01818" >rk</text>
<text x="774.56" y="234.6" font-family="Liberation Sans" font-weight="400" font-size="21.8" textLength="12.65" lengthAdjust="spacingAndGlyphs" fill="#e01818" >R</text>
<text x="786.11 797.28" y="234.6" font-family="Liberation Sans" font-weight="400" font-size="21.8" fill="#e01818" >ed</text>
<text x="828.65" y="234.6" font-family="Liberation Sans" font-weight="400" font-size="21.8" textLength="10.77" lengthAdjust="spacingAndGlyphs" fill="#e01818" >Y</text>
<text x="838.68" y="234.6" font-family="Liberation Sans" font-weight="400" font-size="21.8" textLength="11.92" lengthAdjust="spacingAndGlyphs" fill="#e01818" >e</text>
<text x="870.46" y="234.6" font-family="Liberation Sans" font-weight="400" font-size="21.8" textLength="11.85" lengthAdjust="spacingAndGlyphs" fill="#e01818" >o</text>
<text x="881.96" y="234.6" font-family="Liberation Sans" font-weight="400" font-size="21.8" textLength="10" lengthAdjust="spacingAndGlyphs" fill="#e01818" >w</text>
<text x="852.78 863.37" y="234.6" font-family="Liberation Sans" font-weight="400" font-size="21.8" fill="#e01818" >ll</text>
<text x="916.83" y="234.6" font-family="Liberation Sans" font-weight="400" font-size="21.8" textLength="11.76" lengthAdjust="spacingAndGlyphs" fill="#e01818" >a</text>
<text x="904.61 932.19 943.61" y="234.6" font-family="Liberation Sans" font-weight="400" font-size="21.8" fill="#e01818" >Fil</text>
<rect x="711.7" y="259" width="222.9" height="235.2" fill="none" stroke="#888" stroke-width="1.2"/>
<foreignObject x="712.3" y="259.4" width="221.7" height="234.4"><div style="width:100%;height:100%;border-radius:50%;background:radial-gradient(closest-side, rgba(198,198,204,1) 0%, rgba(198,198,204,0.66) 30%, rgba(198,198,204,0.32) 62%, rgba(198,198,204,0) 100%), conic-gradient(#c3be00 0deg, #c86800 45deg, #d2080e 90deg, #5a0078 135deg, #0a0ad2 180deg, #005a5a 225deg, #14c314 270deg, #78b400 315deg, #c3be00 360deg)"></div></foreignObject>
<line x1="739.56" y1="259" x2="739.56" y2="494.2" stroke="#222" stroke-width="1.1" stroke-dasharray="1.6 2.2"/>
<line x1="711.7" y1="288.4" x2="934.6" y2="288.4" stroke="#222" stroke-width="1.1" stroke-dasharray="1.6 2.2"/>
<line x1="767.43" y1="259" x2="767.43" y2="494.2" stroke="#222" stroke-width="1.1" stroke-dasharray="1.6 2.2"/>
<line x1="711.7" y1="317.8" x2="934.6" y2="317.8" stroke="#222" stroke-width="1.1" stroke-dasharray="1.6 2.2"/>
<line x1="795.29" y1="259" x2="795.29" y2="494.2" stroke="#222" stroke-width="1.1" stroke-dasharray="1.6 2.2"/>
<line x1="711.7" y1="347.2" x2="934.6" y2="347.2" stroke="#222" stroke-width="1.1" stroke-dasharray="1.6 2.2"/>
<line x1="823.15" y1="259" x2="823.15" y2="494.2" stroke="#222" stroke-width="1.1" stroke-dasharray="1.6 2.2"/>
<line x1="711.7" y1="376.6" x2="934.6" y2="376.6" stroke="#222" stroke-width="1.1" stroke-dasharray="1.6 2.2"/>
<line x1="851.01" y1="259" x2="851.01" y2="494.2" stroke="#222" stroke-width="1.1" stroke-dasharray="1.6 2.2"/>
<line x1="711.7" y1="406" x2="934.6" y2="406" stroke="#222" stroke-width="1.1" stroke-dasharray="1.6 2.2"/>
<line x1="878.88" y1="259" x2="878.88" y2="494.2" stroke="#222" stroke-width="1.1" stroke-dasharray="1.6 2.2"/>
<line x1="711.7" y1="435.4" x2="934.6" y2="435.4" stroke="#222" stroke-width="1.1" stroke-dasharray="1.6 2.2"/>
<line x1="906.74" y1="259" x2="906.74" y2="494.2" stroke="#222" stroke-width="1.1" stroke-dasharray="1.6 2.2"/>
<line x1="711.7" y1="464.8" x2="934.6" y2="464.8" stroke="#222" stroke-width="1.1" stroke-dasharray="1.6 2.2"/>
<text x="689.56" y="262.5" font-family="Liberation Serif" font-weight="700" font-size="10.69" textLength="5.81" lengthAdjust="spacingAndGlyphs" fill="#222" >+</text>
<text x="694.63 699.77 704.76" y="262.5" font-family="Liberation Serif" font-weight="700" font-size="10.69" fill="#222" >100</text>
<text x="694.46" y="291.9" font-family="Liberation Serif" font-weight="700" font-size="10.69" textLength="5.85" lengthAdjust="spacingAndGlyphs" fill="#222" >+</text>
<text x="699.56 704.75" y="291.9" font-family="Liberation Serif" font-weight="700" font-size="10.69" fill="#222" >75</text>
<text x="694.46" y="321.3" font-family="Liberation Serif" font-weight="700" font-size="10.69" textLength="5.85" lengthAdjust="spacingAndGlyphs" fill="#222" >+</text>
<text x="699.72 704.76" y="321.3" font-family="Liberation Serif" font-weight="700" font-size="10.69" fill="#222" >50</text>
<text x="694.46" y="350.7" font-family="Liberation Serif" font-weight="700" font-size="10.69" textLength="5.85" lengthAdjust="spacingAndGlyphs" fill="#222" >+</text>
<text x="699.74 704.75" y="350.7" font-family="Liberation Serif" font-weight="700" font-size="10.69" fill="#222" >25</text>
<text x="694.61 699.17 704.8" y="380.1" font-family="Liberation Serif" font-weight="700" font-size="10.69" fill="#222" >-a*</text>
<text x="694.61 699.25 704.75" y="409.5" font-family="Liberation Serif" font-weight="700" font-size="10.69" fill="#222" >-25</text>
<text x="694.61 699.22 704.76" y="438.9" font-family="Liberation Serif" font-weight="700" font-size="10.69" fill="#222" >-50</text>
<text x="694.61 699.07 704.75" y="468.3" font-family="Liberation Serif" font-weight="700" font-size="10.69" fill="#222" >-75</text>
<text x="689.71 693.98 699.45 704.76" y="497.7" font-family="Liberation Serif" font-weight="700" font-size="10.69" fill="#222" >-100</text>
<text x="936.04 941.96 947.7" y="380.1" font-family="Liberation Serif" font-weight="700" font-size="10.69" fill="#222" >+a*</text>
<text x="814.95 820.93 826.84" y="257.7" font-family="Liberation Serif" font-weight="700" font-size="10.39" fill="#222" >+b*</text>
<text x="701.51 705.78 711.25 716.56" y="505.1" font-family="Liberation Serif" font-weight="700" font-size="10.69" fill="#222" >-100</text>
<text x="731.82 736.28 741.96" y="505.1" font-family="Liberation Serif" font-weight="700" font-size="10.69" fill="#222" >-75</text>
<text x="759.68 764.3 769.84" y="505.1" font-family="Liberation Serif" font-weight="700" font-size="10.69" fill="#222" >-50</text>
<text x="787.55 792.18 797.68" y="505.1" font-family="Liberation Serif" font-weight="700" font-size="10.69" fill="#222" >-25</text>
<text x="819.96" y="505.1" font-family="Liberation Serif" font-weight="700" font-size="10.69" textLength="5.82" lengthAdjust="spacingAndGlyphs" fill="#222" >b</text>
<text x="815.41 825.6" y="505.1" font-family="Liberation Serif" font-weight="700" font-size="10.69" fill="#222" >-*</text>
<text x="843.12" y="505.1" font-family="Liberation Serif" font-weight="700" font-size="10.69" textLength="5.85" lengthAdjust="spacingAndGlyphs" fill="#222" >+</text>
<text x="848.41 853.41" y="505.1" font-family="Liberation Serif" font-weight="700" font-size="10.69" fill="#222" >25</text>
<text x="870.98" y="505.1" font-family="Liberation Serif" font-weight="700" font-size="10.69" textLength="5.85" lengthAdjust="spacingAndGlyphs" fill="#222" >+</text>
<text x="876.24 881.29" y="505.1" font-family="Liberation Serif" font-weight="700" font-size="10.69" fill="#222" >50</text>
<text x="898.85" y="505.1" font-family="Liberation Serif" font-weight="700" font-size="10.69" textLength="5.85" lengthAdjust="spacingAndGlyphs" fill="#222" >+</text>
<text x="903.95 909.13" y="505.1" font-family="Liberation Serif" font-weight="700" font-size="10.69" fill="#222" >75</text>
<text x="924.26" y="505.1" font-family="Liberation Serif" font-weight="700" font-size="10.69" textLength="5.81" lengthAdjust="spacingAndGlyphs" fill="#222" >+</text>
<text x="929.33 934.47 939.46" y="505.1" font-family="Liberation Serif" font-weight="700" font-size="10.69" fill="#222" >100</text>
<rect x="671.7" y="259.8" width="12.8" height="234.4" fill="url(#lbar)" stroke="#999" stroke-width="0.8"/>
<line x1="668.5" y1="258.5" x2="668.5" y2="494.2" stroke="#888" stroke-width="1" />
<line x1="664" y1="258.5" x2="668.5" y2="258.5" stroke="#888" stroke-width="1" />
<line x1="664" y1="494.2" x2="668.5" y2="494.2" stroke="#888" stroke-width="1" />
<text x="647.87 653.76 659.5" y="257.7" font-family="Liberation Serif" font-weight="700" font-size="10.39" fill="#222" >100</text>
<text x="677.01" y="257.7" font-family="Liberation Serif" font-weight="700" font-size="10.39" textLength="5.43" lengthAdjust="spacingAndGlyphs" fill="#222" >L</text>
<text x="671.45 682.24" y="257.7" font-family="Liberation Serif" font-weight="700" font-size="10.39" fill="#222" >+*</text>
<text x="654.66" y="505.1" font-family="Liberation Serif" font-weight="700" font-size="10.69" textLength="4.48" lengthAdjust="spacingAndGlyphs" fill="#222" >0</text>
<text x="673.24" y="505.1" font-family="Liberation Serif" font-weight="700" font-size="10.69" textLength="6.27" lengthAdjust="spacingAndGlyphs" fill="#222" >L</text>
<text x="679.6" y="505.1" font-family="Liberation Serif" font-weight="700" font-size="10.69" fill="#222" >*</text>
<line x1="651.2" y1="371.5" x2="668.5" y2="371.5" stroke="#1a1ad0" stroke-width="1.8" />
<circle cx="904.5" cy="278.6" r="1.6" fill="#555"/>
<rect x="645" y="530.9" width="319" height="30.4" fill="#3aa2f2" />
<text x="650.1" y="548.6" font-family="Liberation Sans" font-weight="400" font-size="17.88" textLength="8.18" lengthAdjust="spacingAndGlyphs" fill="#f4f4f4" >T</text>
<text x="657.69" y="548.6" font-family="Liberation Sans" font-weight="400" font-size="17.88" textLength="8.98" lengthAdjust="spacingAndGlyphs" fill="#f4f4f4" >e</text>
<text x="665.86" y="548.6" font-family="Liberation Sans" font-weight="400" font-size="17.88" textLength="8.68" lengthAdjust="spacingAndGlyphs" fill="#f4f4f4" >s</text>
<text x="689.66" y="548.6" font-family="Liberation Sans" font-weight="400" font-size="17.88" textLength="8.77" lengthAdjust="spacingAndGlyphs" fill="#f4f4f4" >S</text>
<text x="705.53" y="548.6" font-family="Liberation Sans" font-weight="400" font-size="17.88" textLength="8.92" lengthAdjust="spacingAndGlyphs" fill="#f4f4f4" >o</text>
<text x="713.09" y="548.6" font-family="Liberation Sans" font-weight="400" font-size="17.88" textLength="9.37" lengthAdjust="spacingAndGlyphs" fill="#f4f4f4" >p</text>
<text x="675.55 699.47 723.46" y="548.6" font-family="Liberation Sans" font-weight="400" font-size="17.88" fill="#f4f4f4" >tt!</text>
<rect x="842" y="533.5" width="71.2" height="16.6" fill="#fffffa" stroke="#2a4cc0" stroke-width="1.3"/>
<text x="842.5" y="548.7" font-family="Liberation Sans" font-weight="400" font-size="19.04" textLength="8.03" lengthAdjust="spacingAndGlyphs" fill="#111" >T</text>
<text x="858.11" y="548.7" font-family="Liberation Sans" font-weight="400" font-size="19.04" textLength="8.2" lengthAdjust="spacingAndGlyphs" fill="#111" >4</text>
<text x="865.67" y="548.7" font-family="Liberation Sans" font-weight="400" font-size="19.04" textLength="8.72" lengthAdjust="spacingAndGlyphs" fill="#111" >3</text>
<text x="881.31" y="548.7" font-family="Liberation Sans" font-weight="400" font-size="19.04" textLength="8.65" lengthAdjust="spacingAndGlyphs" fill="#111" >0</text>
<text x="889.04" y="548.7" font-family="Liberation Sans" font-weight="400" font-size="19.04" textLength="8.84" lengthAdjust="spacingAndGlyphs" fill="#111" >m</text>
<text x="897.09" y="548.7" font-family="Liberation Sans" font-weight="400" font-size="19.04" textLength="8.52" lengthAdjust="spacingAndGlyphs" fill="#111" >s</text>
<text x="851.7 873.45" y="548.7" font-family="Liberation Sans" font-weight="400" font-size="19.04" fill="#111" >:.</text>
<rect x="918.6" y="533.5" width="32.2" height="16.6" fill="#fffffa" stroke="#2a4cc0" stroke-width="1.3"/>
<text x="917.6" y="548.7" font-family="Liberation Sans" font-weight="400" font-size="19.04" textLength="9.46" lengthAdjust="spacingAndGlyphs" fill="#ee1111" >L</text>
<text x="926.23" y="548.7" font-family="Liberation Sans" font-weight="400" font-size="19.04" textLength="8.84" lengthAdjust="spacingAndGlyphs" fill="#ee1111" >o</text>
<text x="934.06" y="548.7" font-family="Liberation Sans" font-weight="400" font-size="19.04" textLength="8.7" lengthAdjust="spacingAndGlyphs" fill="#ee1111" >c</text>
<text x="941.53" y="548.7" font-family="Liberation Sans" font-weight="400" font-size="19.04" textLength="8.64" lengthAdjust="spacingAndGlyphs" fill="#ee1111" >k</text>
<rect x="650" y="552.4" width="309.3" height="4.4" fill="#ffffff" />
<circle cx="791.3" cy="538.4" r="2.9" fill="#ffffff"/>
<circle cx="804.9" cy="538.4" r="2.9" fill="#111"/>
<circle cx="818" cy="538.4" r="2.9" fill="#111"/>
<rect x="645" y="561.3" width="319" height="41.5" fill="url(#tb)" />
<g transform="translate(0,-2.1)">
<path d="M670.3 571.8 L683.5 578.2 L670.3 584.6 Z" fill="#7ee41e" stroke="#7ee41e" stroke-width="1.6" stroke-linejoin="round"/>
<path d="M732.9 571.8 L743.9 578.2 L732.9 584.6 Z" fill="#7ee41e" stroke="#7ee41e" stroke-width="1.6" stroke-linejoin="round"/>
<rect x="743.3" y="571" width="5.6" height="14.5" fill="#7ee41e" rx="1.2"/>
<rect x="797.5" y="570.8" width="14" height="14.6" fill="#a9a9a9" rx="1.8"/>
<rect x="860.7" y="569.8" width="15.1" height="15.5" fill="#7ee41e" rx="2"/>
<rect x="863.5" y="571.4" width="9.4" height="4.2" fill="#1e1e1e" />
<rect x="864.3" y="573.6" width="7" height="1" fill="#7ee41e" />
<rect x="870.7" y="571.9" width="1.4" height="1.4" fill="#7ee41e" />
<rect x="863.1" y="578.2" width="10.4" height="5.8" fill="#1e1e1e" />
<rect x="864.3" y="580" width="8" height="3.4" fill="#7ee41e" />
<path d="M923.1 584.6 V572.6 H928.3 L929.9 574.4 H938.9 V578.4" fill="none" stroke="#7ee41e" stroke-width="1.5" stroke-linejoin="round"/>
<path d="M922.9 585.2 L926.1 578.6 H942.1 L939.1 585.2 Z" fill="#1e1e1e" stroke="#7ee41e" stroke-width="1.5" stroke-linejoin="round"/>
<path d="M923.7 585.2 L925.3 581.6 H940.7 L939.1 585.2 Z" fill="#7ee41e"/>
<circle cx="934.7" cy="570.4" r="1.1" fill="#7ee41e"/><circle cx="937.9" cy="572.0" r="1.2" fill="#7ee41e"/>
<text x="662.89" y="600.9" font-family="Liberation Sans" font-weight="700" font-size="11.34" textLength="5.53" lengthAdjust="spacingAndGlyphs" fill="#7ee41e" >C</text>
<text x="668.2" y="600.9" font-family="Liberation Sans" font-weight="700" font-size="11.34" textLength="5.23" lengthAdjust="spacingAndGlyphs" fill="#7ee41e" >a</text>
<text x="674.68 679.96 684.07" y="600.9" font-family="Liberation Sans" font-weight="700" font-size="11.34" fill="#7ee41e" >li.</text>
<text x="727.44" y="600.9" font-family="Liberation Sans" font-weight="700" font-size="11.34" textLength="5.77" lengthAdjust="spacingAndGlyphs" fill="#7ee41e" >M</text>
<text x="732.6" y="600.9" font-family="Liberation Sans" font-weight="700" font-size="11.34" textLength="5.57" lengthAdjust="spacingAndGlyphs" fill="#7ee41e" >e</text>
<text x="737.82" y="600.9" font-family="Liberation Sans" font-weight="700" font-size="11.34" textLength="5.05" lengthAdjust="spacingAndGlyphs" fill="#7ee41e" >a</text>
<text x="742.83" y="600.9" font-family="Liberation Sans" font-weight="700" font-size="11.34" textLength="5.61" lengthAdjust="spacingAndGlyphs" fill="#7ee41e" >s</text>
<text x="748.01" y="600.9" font-family="Liberation Sans" font-weight="700" font-size="11.34" fill="#7ee41e" >.</text>
<text x="793.76" y="600.9" font-family="Liberation Sans" font-weight="700" font-size="11.34" textLength="5.62" lengthAdjust="spacingAndGlyphs" fill="#9a9a9a" >S</text>
<text x="804.26" y="600.9" font-family="Liberation Sans" font-weight="700" font-size="11.34" textLength="5.79" lengthAdjust="spacingAndGlyphs" fill="#9a9a9a" >o</text>
<text x="809.29" y="600.9" font-family="Liberation Sans" font-weight="700" font-size="11.34" textLength="6.12" lengthAdjust="spacingAndGlyphs" fill="#9a9a9a" >p</text>
<text x="799.95" y="600.9" font-family="Liberation Sans" font-weight="700" font-size="11.34" fill="#9a9a9a" >t</text>
<text x="857.15" y="600.9" font-family="Liberation Sans" font-weight="700" font-size="11.34" textLength="5.84" lengthAdjust="spacingAndGlyphs" fill="#7ee41e" >S</text>
<text x="862.63" y="600.9" font-family="Liberation Sans" font-weight="700" font-size="11.34" textLength="5.47" lengthAdjust="spacingAndGlyphs" fill="#7ee41e" >a</text>
<text x="868.4" y="600.9" font-family="Liberation Sans" font-weight="700" font-size="11.34" textLength="5.32" lengthAdjust="spacingAndGlyphs" fill="#7ee41e" >v</text>
<text x="873.53" y="600.9" font-family="Liberation Sans" font-weight="700" font-size="11.34" textLength="6.04" lengthAdjust="spacingAndGlyphs" fill="#7ee41e" >e</text>
<text x="920.63" y="600.9" font-family="Liberation Sans" font-weight="700" font-size="11.34" textLength="6" lengthAdjust="spacingAndGlyphs" fill="#7ee41e" >O</text>
<text x="925.89" y="600.9" font-family="Liberation Sans" font-weight="700" font-size="11.34" textLength="6.5" lengthAdjust="spacingAndGlyphs" fill="#7ee41e" >p</text>
<text x="931.81" y="600.9" font-family="Liberation Sans" font-weight="700" font-size="11.34" textLength="6.18" lengthAdjust="spacingAndGlyphs" fill="#7ee41e" >e</text>
<text x="937.15" y="600.9" font-family="Liberation Sans" font-weight="700" font-size="11.34" textLength="6.78" lengthAdjust="spacingAndGlyphs" fill="#7ee41e" >n</text>
</g>
<line x1="1012" y1="2.4" x2="1288" y2="2.4" stroke="#d0d4d0" stroke-width="1" />
<line x1="1012" y1="0" x2="1012" y2="2.4" stroke="#d0d4d0" stroke-width="1" />
<line x1="1122" y1="0" x2="1122" y2="2.4" stroke="#d0d4d0" stroke-width="1" />
<line x1="1188" y1="0" x2="1188" y2="2.4" stroke="#d0d4d0" stroke-width="1" />
<line x1="1221.6" y1="0" x2="1221.6" y2="2.4" stroke="#d0d4d0" stroke-width="1" />
<line x1="1254.2" y1="0" x2="1254.2" y2="2.4" stroke="#d0d4d0" stroke-width="1" />
<rect x="989.4" y="60.8" width="271.4" height="468" fill="#f4f4f4" stroke="#c4e6fb" stroke-width="1"/>
<rect x="989.4" y="60.8" width="271.4" height="34.9" fill="#cfeafc" />
<rect x="989.4" y="494.6" width="271.4" height="34.1" fill="#cfeafc" />
<text x="1061.09" y="85.3" font-family="Liberation Sans" font-weight="400" font-size="21.51" textLength="11.08" lengthAdjust="spacingAndGlyphs" fill="#111" >T</text>
<text x="1071.46 1082.93 1095.94 1115.31 1125.43 1139.11 1149.91 1161.39 1168.57 1179.62" y="85.3" font-family="Liberation Sans" font-weight="400" font-size="21.51" fill="#111" >estsetting</text>
<text x="993.8" y="135.9" font-family="Liberation Sans" font-weight="400" font-size="22.24" textLength="11.81" lengthAdjust="spacingAndGlyphs" fill="#111" >S</text>
<text x="1004.48" y="135.9" font-family="Liberation Sans" font-weight="400" font-size="22.24" textLength="11.03" lengthAdjust="spacingAndGlyphs" fill="#111" >a</text>
<text x="1015.98" y="135.9" font-family="Liberation Sans" font-weight="400" font-size="22.24" textLength="10.33" lengthAdjust="spacingAndGlyphs" fill="#111" >v</text>
<text x="1025.86" y="135.9" font-family="Liberation Sans" font-weight="400" font-size="22.24" textLength="12.08" lengthAdjust="spacingAndGlyphs" fill="#111" >e</text>
<text x="1047.27" y="135.9" font-family="Liberation Sans" font-weight="400" font-size="22.24" textLength="12.11" lengthAdjust="spacingAndGlyphs" fill="#111" >m</text>
<text x="1058.05" y="135.9" font-family="Liberation Sans" font-weight="400" font-size="22.24" textLength="12" lengthAdjust="spacingAndGlyphs" fill="#111" >o</text>
<text x="1079.49" y="135.9" font-family="Liberation Sans" font-weight="400" font-size="22.24" textLength="12.08" lengthAdjust="spacingAndGlyphs" fill="#111" >e</text>
<text x="1068.84" y="135.9" font-family="Liberation Sans" font-weight="400" font-size="22.24" fill="#111" >d</text>
<text x="1177.97" y="135.9" font-family="Liberation Sans" font-weight="400" font-size="22.24" textLength="10.11" lengthAdjust="spacingAndGlyphs" fill="#1414e6" >A</text>
<text x="1208.85" y="135.9" font-family="Liberation Sans" font-weight="400" font-size="22.24" textLength="11.84" lengthAdjust="spacingAndGlyphs" fill="#1414e6" >o</text>
<text x="1187.44 1201.01" y="135.9" font-family="Liberation Sans" font-weight="400" font-size="22.24" fill="#1414e6" >ut</text>
<text x="993.8" y="174.6" font-family="Liberation Sans" font-weight="400" font-size="21.37" textLength="11.82" lengthAdjust="spacingAndGlyphs" fill="#111" >S</text>
<text x="1004.49" y="174.6" font-family="Liberation Sans" font-weight="400" font-size="21.37" textLength="11.04" lengthAdjust="spacingAndGlyphs" fill="#111" >a</text>
<text x="1016" y="174.6" font-family="Liberation Sans" font-weight="400" font-size="21.37" textLength="10.34" lengthAdjust="spacingAndGlyphs" fill="#111" >v</text>
<text x="1068.78" y="174.6" font-family="Liberation Sans" font-weight="400" font-size="21.37" textLength="12.13" lengthAdjust="spacingAndGlyphs" fill="#111" >m</text>
<text x="1025.99 1050.33 1061.75 1079.67" y="174.6" font-family="Liberation Sans" font-weight="400" font-size="21.37" fill="#111" >etie</text>
<text x="1187.37 1198.49" y="174.6" font-family="Liberation Sans" font-weight="400" font-size="21.37" fill="#1414e6" >1s</text>
<text x="993.36" y="213.9" font-family="Liberation Sans" font-weight="400" font-size="23.26" textLength="12.56" lengthAdjust="spacingAndGlyphs" fill="#111" >M</text>
<text x="1004.38" y="213.9" font-family="Liberation Sans" font-weight="400" font-size="23.26" textLength="10.92" lengthAdjust="spacingAndGlyphs" fill="#111" >a</text>
<text x="1015.6" y="213.9" font-family="Liberation Sans" font-weight="400" font-size="23.26" textLength="10.55" lengthAdjust="spacingAndGlyphs" fill="#111" >x</text>
<text x="1037.05" y="213.9" font-family="Liberation Sans" font-weight="400" font-size="23.26" textLength="10.15" lengthAdjust="spacingAndGlyphs" fill="#111" >A</text>
<text x="1068.04" y="213.9" font-family="Liberation Sans" font-weight="400" font-size="23.26" textLength="11.88" lengthAdjust="spacingAndGlyphs" fill="#111" >o</text>
<text x="1089.77" y="213.9" font-family="Liberation Sans" font-weight="400" font-size="23.26" textLength="10.9" lengthAdjust="spacingAndGlyphs" fill="#111" >T</text>
<text x="1046.29 1060.04 1103.26 1109.97 1123.75 1132.13" y="213.9" font-family="Liberation Sans" font-weight="400" font-size="23.26" fill="#111" >utint.</text>
<text x="1165.75" y="213.9" font-family="Liberation Sans" font-weight="400" font-size="23.26" textLength="11.87" lengthAdjust="spacingAndGlyphs" fill="#1414e6" >5</text>
<text x="1176.43" y="213.9" font-family="Liberation Sans" font-weight="400" font-size="23.26" textLength="11.78" lengthAdjust="spacingAndGlyphs" fill="#1414e6" >0</text>
<text x="1187.08" y="213.9" font-family="Liberation Sans" font-weight="400" font-size="23.26" textLength="11.78" lengthAdjust="spacingAndGlyphs" fill="#1414e6" >0</text>
<text x="1197.74" y="213.9" font-family="Liberation Sans" font-weight="400" font-size="23.26" textLength="11.78" lengthAdjust="spacingAndGlyphs" fill="#1414e6" >0</text>
<text x="1208.26" y="213.9" font-family="Liberation Sans" font-weight="400" font-size="23.26" textLength="12.03" lengthAdjust="spacingAndGlyphs" fill="#1414e6" >m</text>
<text x="1219.23" y="213.9" font-family="Liberation Sans" font-weight="400" font-size="23.26" textLength="11.61" lengthAdjust="spacingAndGlyphs" fill="#1414e6" >s</text>
<text x="994.57" y="251.8" font-family="Liberation Sans" font-weight="400" font-size="21.37" textLength="10.28" lengthAdjust="spacingAndGlyphs" fill="#111" >A</text>
<text x="1005.28" y="251.8" font-family="Liberation Sans" font-weight="400" font-size="21.37" textLength="10.36" lengthAdjust="spacingAndGlyphs" fill="#111" >v</text>
<text x="1036.77" y="251.8" font-family="Liberation Sans" font-weight="400" font-size="21.37" textLength="11.06" lengthAdjust="spacingAndGlyphs" fill="#111" >a</text>
<text x="1101.16" y="251.8" font-family="Liberation Sans" font-weight="400" font-size="21.37" textLength="12.14" lengthAdjust="spacingAndGlyphs" fill="#111" >m</text>
<text x="1015.29 1027.88 1047.77 1058.3 1082.68 1094.11 1112.07" y="251.8" font-family="Liberation Sans" font-weight="400" font-size="21.37" fill="#111" >ergetie</text>
<text x="1193.24" y="251.8" font-family="Liberation Sans" font-weight="400" font-size="21.37" textLength="9.19" lengthAdjust="spacingAndGlyphs" fill="#1414e6" >1</text>
<text x="994.55" y="290.7" font-family="Liberation Sans" font-weight="400" font-size="21.51" textLength="10.23" lengthAdjust="spacingAndGlyphs" fill="#111" >W</text>
<text x="1004.44" y="290.7" font-family="Liberation Sans" font-weight="400" font-size="21.51" textLength="10.98" lengthAdjust="spacingAndGlyphs" fill="#111" >a</text>
<text x="1015.88" y="290.7" font-family="Liberation Sans" font-weight="400" font-size="21.51" textLength="10.28" lengthAdjust="spacingAndGlyphs" fill="#111" >v</text>
<text x="1046.58" y="290.7" font-family="Liberation Sans" font-weight="400" font-size="21.51" textLength="12.34" lengthAdjust="spacingAndGlyphs" fill="#111" >R</text>
<text x="1057.82" y="290.7" font-family="Liberation Sans" font-weight="400" font-size="21.51" textLength="10.98" lengthAdjust="spacingAndGlyphs" fill="#111" >a</text>
<text x="1025.74 1068.4 1079.34 1089.79" y="290.7" font-family="Liberation Sans" font-weight="400" font-size="21.51" fill="#111" >enge</text>
<text x="1111.74" y="290.7" font-family="Liberation Sans" font-weight="400" font-size="21.51" textLength="11.08" lengthAdjust="spacingAndGlyphs" fill="#1414e6" >4</text>
<text x="1121.94" y="290.7" font-family="Liberation Sans" font-weight="400" font-size="21.51" textLength="11.68" lengthAdjust="spacingAndGlyphs" fill="#1414e6" >0</text>
<text x="1132.51" y="290.7" font-family="Liberation Sans" font-weight="400" font-size="21.51" textLength="11.68" lengthAdjust="spacingAndGlyphs" fill="#1414e6" >0</text>
<text x="1153.5" y="290.7" font-family="Liberation Sans" font-weight="400" font-size="21.51" textLength="11.93" lengthAdjust="spacingAndGlyphs" fill="#1414e6" >m</text>
<text x="1175.58" y="290.7" font-family="Liberation Sans" font-weight="400" font-size="21.51" textLength="10.04" lengthAdjust="spacingAndGlyphs" fill="#1414e6" >–</text>
<text x="1206.45" y="290.7" font-family="Liberation Sans" font-weight="400" font-size="21.51" textLength="11.68" lengthAdjust="spacingAndGlyphs" fill="#1414e6" >0</text>
<text x="1217.02" y="290.7" font-family="Liberation Sans" font-weight="400" font-size="21.51" textLength="11.68" lengthAdjust="spacingAndGlyphs" fill="#1414e6" >0</text>
<text x="1238.01" y="290.7" font-family="Liberation Sans" font-weight="400" font-size="21.51" textLength="11.93" lengthAdjust="spacingAndGlyphs" fill="#1414e6" >m</text>
<text x="1142.91 1195.73 1227.42" y="290.7" font-family="Liberation Sans" font-weight="400" font-size="21.51" fill="#1414e6" >n7n</text>
<text x="993.78" y="329.2" font-family="Liberation Sans" font-weight="400" font-size="22.24" textLength="11.99" lengthAdjust="spacingAndGlyphs" fill="#111" >S</text>
<text x="1015.53" y="329.2" font-family="Liberation Sans" font-weight="400" font-size="22.24" textLength="11.2" lengthAdjust="spacingAndGlyphs" fill="#111" >a</text>
<text x="1048.2" y="329.2" font-family="Liberation Sans" font-weight="400" font-size="22.24" textLength="11.2" lengthAdjust="spacingAndGlyphs" fill="#111" >a</text>
<text x="1091.9" y="329.2" font-family="Liberation Sans" font-weight="400" font-size="22.24" textLength="11.79" lengthAdjust="spacingAndGlyphs" fill="#111" >O</text>
<text x="1124.35" y="329.2" font-family="Liberation Sans" font-weight="400" font-size="22.24" textLength="12.26" lengthAdjust="spacingAndGlyphs" fill="#111" >e</text>
<text x="1146.99" y="329.2" font-family="Liberation Sans" font-weight="400" font-size="22.24" textLength="10.49" lengthAdjust="spacingAndGlyphs" fill="#111" >v</text>
<text x="1157.02" y="329.2" font-family="Liberation Sans" font-weight="400" font-size="22.24" textLength="12.26" lengthAdjust="spacingAndGlyphs" fill="#111" >e</text>
<text x="1007.49 1026.24 1037.4 1060.86 1070.07 1102.24 1114.1 1137.09 1169.76" y="329.2" font-family="Liberation Sans" font-weight="400" font-size="22.24" fill="#111" >tndrdbsrr</text>
<text x="1187.51" y="329.2" font-family="Liberation Sans" font-weight="400" font-size="22.24" textLength="11.65" lengthAdjust="spacingAndGlyphs" fill="#1414e6" >0</text>
<text x="1176.31 1199.44" y="329.2" font-family="Liberation Sans" font-weight="400" font-size="22.24" fill="#1414e6" >1°</text>
<text x="1047.38" y="367.9" font-family="Liberation Sans" font-weight="400" font-size="22.24" textLength="11.84" lengthAdjust="spacingAndGlyphs" fill="#111" >S</text>
<text x="1058.04" y="367.9" font-family="Liberation Sans" font-weight="400" font-size="22.24" textLength="12.04" lengthAdjust="spacingAndGlyphs" fill="#111" >o</text>
<text x="1101.05" y="367.9" font-family="Liberation Sans" font-weight="400" font-size="22.24" textLength="12.11" lengthAdjust="spacingAndGlyphs" fill="#111" >e</text>
<text x="992.78 1007.8 1015.09 1025.55 1039.36 1068.65 1081.32 1090.59" y="367.9" font-family="Liberation Sans" font-weight="400" font-size="22.24" fill="#111" >Lighturc</text>
<text x="1180.87" y="367.9" font-family="Liberation Sans" font-weight="400" font-size="22.24" textLength="12.56" lengthAdjust="spacingAndGlyphs" fill="#1414e6" >D</text>
<text x="1203.12" y="367.9" font-family="Liberation Sans" font-weight="400" font-size="22.24" textLength="12.09" lengthAdjust="spacingAndGlyphs" fill="#1414e6" >5</text>
<text x="1192.04" y="367.9" font-family="Liberation Sans" font-weight="400" font-size="22.24" fill="#1414e6" >6</text>
<text x="993.78" y="406.7" font-family="Liberation Sans" font-weight="400" font-size="22.53" textLength="11.63" lengthAdjust="spacingAndGlyphs" fill="#111" >C</text>
<text x="1004.42" y="406.7" font-family="Liberation Sans" font-weight="400" font-size="22.53" textLength="12.01" lengthAdjust="spacingAndGlyphs" fill="#111" >o</text>
<text x="1025.89" y="406.7" font-family="Liberation Sans" font-weight="400" font-size="22.53" textLength="12.01" lengthAdjust="spacingAndGlyphs" fill="#111" >o</text>
<text x="1047.85" y="406.7" font-family="Liberation Sans" font-weight="400" font-size="22.53" textLength="11.01" lengthAdjust="spacingAndGlyphs" fill="#111" >T</text>
<text x="1058.08" y="406.7" font-family="Liberation Sans" font-weight="400" font-size="22.53" textLength="12.01" lengthAdjust="spacingAndGlyphs" fill="#111" >o</text>
<text x="1079.53" y="406.7" font-family="Liberation Sans" font-weight="400" font-size="22.53" textLength="12.08" lengthAdjust="spacingAndGlyphs" fill="#111" >e</text>
<text x="1101.07" y="406.7" font-family="Liberation Sans" font-weight="400" font-size="22.53" textLength="11.04" lengthAdjust="spacingAndGlyphs" fill="#111" >a</text>
<text x="1133.18" y="406.7" font-family="Liberation Sans" font-weight="400" font-size="22.53" textLength="12.08" lengthAdjust="spacingAndGlyphs" fill="#111" >e</text>
<text x="1018.65 1038.31 1072.31 1091.97 1111.46 1122.66" y="406.7" font-family="Liberation Sans" font-weight="400" font-size="22.53" fill="#111" >lrlrnc</text>
<text x="1181.46" y="406.7" font-family="Liberation Sans" font-weight="400" font-size="22.53" textLength="11.99" lengthAdjust="spacingAndGlyphs" fill="#1414e6" >0</text>
<text x="1203.12" y="406.7" font-family="Liberation Sans" font-weight="400" font-size="22.53" textLength="12.09" lengthAdjust="spacingAndGlyphs" fill="#1414e6" >5</text>
<text x="1192.78" y="406.7" font-family="Liberation Sans" font-weight="400" font-size="22.53" fill="#1414e6" >.</text>
<text x="993.8" y="444.8" font-family="Liberation Sans" font-weight="400" font-size="21.66" textLength="11.74" lengthAdjust="spacingAndGlyphs" fill="#111" >S</text>
<text x="1004.35" y="444.8" font-family="Liberation Sans" font-weight="400" font-size="21.66" textLength="12.01" lengthAdjust="spacingAndGlyphs" fill="#111" >e</text>
<text x="1025.2" y="444.8" font-family="Liberation Sans" font-weight="400" font-size="21.66" textLength="12.33" lengthAdjust="spacingAndGlyphs" fill="#111" >R</text>
<text x="1036.43" y="444.8" font-family="Liberation Sans" font-weight="400" font-size="21.66" textLength="10.97" lengthAdjust="spacingAndGlyphs" fill="#111" >a</text>
<text x="1068.35" y="444.8" font-family="Liberation Sans" font-weight="400" font-size="21.66" textLength="12.01" lengthAdjust="spacingAndGlyphs" fill="#111" >e</text>
<text x="1017.91 1046.96 1057.89" y="444.8" font-family="Liberation Sans" font-weight="400" font-size="21.66" fill="#111" >tng</text>
<text x="1111.74" y="444.8" font-family="Liberation Sans" font-weight="400" font-size="21.66" textLength="11.05" lengthAdjust="spacingAndGlyphs" fill="#1414e6" >4</text>
<text x="1121.92" y="444.8" font-family="Liberation Sans" font-weight="400" font-size="21.66" textLength="11.65" lengthAdjust="spacingAndGlyphs" fill="#1414e6" >0</text>
<text x="1132.46" y="444.8" font-family="Liberation Sans" font-weight="400" font-size="21.66" textLength="11.65" lengthAdjust="spacingAndGlyphs" fill="#1414e6" >0</text>
<text x="1153.41" y="444.8" font-family="Liberation Sans" font-weight="400" font-size="21.66" textLength="11.9" lengthAdjust="spacingAndGlyphs" fill="#1414e6" >m</text>
<text x="1175.44" y="444.8" font-family="Liberation Sans" font-weight="400" font-size="21.66" textLength="10.02" lengthAdjust="spacingAndGlyphs" fill="#1414e6" >–</text>
<text x="1206.25" y="444.8" font-family="Liberation Sans" font-weight="400" font-size="21.66" textLength="11.65" lengthAdjust="spacingAndGlyphs" fill="#1414e6" >0</text>
<text x="1216.79" y="444.8" font-family="Liberation Sans" font-weight="400" font-size="21.66" textLength="11.65" lengthAdjust="spacingAndGlyphs" fill="#1414e6" >0</text>
<text x="1237.74" y="444.8" font-family="Liberation Sans" font-weight="400" font-size="21.66" textLength="11.9" lengthAdjust="spacingAndGlyphs" fill="#1414e6" >m</text>
<text x="1142.79 1195.5 1227.11" y="444.8" font-family="Liberation Sans" font-weight="400" font-size="21.66" fill="#1414e6" >n7n</text>
<text x="994.6" y="483.2" font-family="Liberation Sans" font-weight="400" font-size="22.09" textLength="10.99" lengthAdjust="spacingAndGlyphs" fill="#9a9a9a" >T</text>
<text x="1015.58" y="483.2" font-family="Liberation Sans" font-weight="400" font-size="22.09" textLength="11.02" lengthAdjust="spacingAndGlyphs" fill="#9a9a9a" >a</text>
<text x="1047.58" y="483.2" font-family="Liberation Sans" font-weight="400" font-size="22.09" textLength="12.1" lengthAdjust="spacingAndGlyphs" fill="#9a9a9a" >m</text>
<text x="1102.03" y="483.2" font-family="Liberation Sans" font-weight="400" font-size="22.09" textLength="10.32" lengthAdjust="spacingAndGlyphs" fill="#9a9a9a" >v</text>
<text x="1134.18" y="483.2" font-family="Liberation Sans" font-weight="400" font-size="22.09" textLength="10.26" lengthAdjust="spacingAndGlyphs" fill="#9a9a9a" >y</text>
<text x="1006.57 1026.06 1037.49 1061.9 1069.62 1080.33 1094.03 1115.44 1125.45" y="483.2" font-family="Liberation Sans" font-weight="400" font-size="22.09" fill="#9a9a9a" >rnsissiit</text>
<rect x="1187.1" y="465.8" width="23" height="23.4" fill="#fafafa" stroke="#555" stroke-width="1.3"/>
<text x="1103.66" y="519.6" font-family="Liberation Sans" font-weight="400" font-size="21.8" textLength="12.09" lengthAdjust="spacingAndGlyphs" fill="#111" >Q</text>
<text x="1114.83 1129.63 1140.1" y="519.6" font-family="Liberation Sans" font-weight="400" font-size="21.8" fill="#111" >uit</text>
<rect x="964" y="530.7" width="324" height="30.2" fill="#3aa2f2" />
<text x="969.7" y="548.4" font-family="Liberation Sans" font-weight="400" font-size="17.88" textLength="8.18" lengthAdjust="spacingAndGlyphs" fill="#f4f4f4" >T</text>
<text x="977.29" y="548.4" font-family="Liberation Sans" font-weight="400" font-size="17.88" textLength="8.98" lengthAdjust="spacingAndGlyphs" fill="#f4f4f4" >e</text>
<text x="985.46" y="548.4" font-family="Liberation Sans" font-weight="400" font-size="17.88" textLength="8.68" lengthAdjust="spacingAndGlyphs" fill="#f4f4f4" >s</text>
<text x="1009.26" y="548.4" font-family="Liberation Sans" font-weight="400" font-size="17.88" textLength="8.77" lengthAdjust="spacingAndGlyphs" fill="#f4f4f4" >S</text>
<text x="1025.13" y="548.4" font-family="Liberation Sans" font-weight="400" font-size="17.88" textLength="8.92" lengthAdjust="spacingAndGlyphs" fill="#f4f4f4" >o</text>
<text x="1032.69" y="548.4" font-family="Liberation Sans" font-weight="400" font-size="17.88" textLength="9.37" lengthAdjust="spacingAndGlyphs" fill="#f4f4f4" >p</text>
<text x="995.15 1019.07 1043.06" y="548.4" font-family="Liberation Sans" font-weight="400" font-size="17.88" fill="#f4f4f4" >tt!</text>
<rect x="1163.6" y="533.6" width="72.7" height="16.8" fill="#fffffa" stroke="#2a4cc0" stroke-width="1.3"/>
<text x="1164.1" y="548.8" font-family="Liberation Sans" font-weight="400" font-size="19.04" textLength="8.03" lengthAdjust="spacingAndGlyphs" fill="#111" >T</text>
<text x="1179.71" y="548.8" font-family="Liberation Sans" font-weight="400" font-size="19.04" textLength="8.2" lengthAdjust="spacingAndGlyphs" fill="#111" >4</text>
<text x="1187.27" y="548.8" font-family="Liberation Sans" font-weight="400" font-size="19.04" textLength="8.72" lengthAdjust="spacingAndGlyphs" fill="#111" >3</text>
<text x="1202.91" y="548.8" font-family="Liberation Sans" font-weight="400" font-size="19.04" textLength="8.65" lengthAdjust="spacingAndGlyphs" fill="#111" >0</text>
<text x="1210.64" y="548.8" font-family="Liberation Sans" font-weight="400" font-size="19.04" textLength="8.84" lengthAdjust="spacingAndGlyphs" fill="#111" >m</text>
<text x="1218.69" y="548.8" font-family="Liberation Sans" font-weight="400" font-size="19.04" textLength="8.52" lengthAdjust="spacingAndGlyphs" fill="#111" >s</text>
<text x="1173.3 1195.05" y="548.8" font-family="Liberation Sans" font-weight="400" font-size="19.04" fill="#111" >:.</text>
<rect x="1241.6" y="533.6" width="33.4" height="16.8" fill="#fffffa" stroke="#2a4cc0" stroke-width="1.3"/>
<text x="1240.55" y="548.8" font-family="Liberation Sans" font-weight="400" font-size="19.04" textLength="9.83" lengthAdjust="spacingAndGlyphs" fill="#ee1111" >L</text>
<text x="1249.51" y="548.8" font-family="Liberation Sans" font-weight="400" font-size="19.04" textLength="9.18" lengthAdjust="spacingAndGlyphs" fill="#ee1111" >o</text>
<text x="1257.64" y="548.8" font-family="Liberation Sans" font-weight="400" font-size="19.04" textLength="9.04" lengthAdjust="spacingAndGlyphs" fill="#ee1111" >c</text>
<text x="1265.4" y="548.8" font-family="Liberation Sans" font-weight="400" font-size="19.04" textLength="8.98" lengthAdjust="spacingAndGlyphs" fill="#ee1111" >k</text>
<rect x="969" y="552.7" width="313.8" height="4.4" fill="#ffffff" />
<rect x="964" y="560.9" width="324" height="41.9" fill="url(#tb)" />
<g transform="translate(0,-2.1)">
<path d="M989.8 571.8 L1003 578.2 L989.8 584.6 Z" fill="#7ee41e" stroke="#7ee41e" stroke-width="1.6" stroke-linejoin="round"/>
<path d="M1053.4 571.8 L1064.4 578.2 L1053.4 584.6 Z" fill="#7ee41e" stroke="#7ee41e" stroke-width="1.6" stroke-linejoin="round"/>
<rect x="1063.8" y="571" width="5.6" height="14.5" fill="#7ee41e" rx="1.2"/>
<rect x="1119" y="570.8" width="14" height="14.6" fill="#a9a9a9" rx="1.8"/>
<rect x="1183.2" y="569.8" width="15.1" height="15.5" fill="#7ee41e" rx="2"/>
<rect x="1186" y="571.4" width="9.4" height="4.2" fill="#1e1e1e" />
<rect x="1186.8" y="573.6" width="7" height="1" fill="#7ee41e" />
<rect x="1193.2" y="571.9" width="1.4" height="1.4" fill="#7ee41e" />
<rect x="1185.6" y="578.2" width="10.4" height="5.8" fill="#1e1e1e" />
<rect x="1186.8" y="580" width="8" height="3.4" fill="#7ee41e" />
<path d="M1246.6 584.6 V572.6 H1251.8 L1253.4 574.4 H1262.4 V578.4" fill="none" stroke="#7ee41e" stroke-width="1.5" stroke-linejoin="round"/>
<path d="M1246.4 585.2 L1249.6 578.6 H1265.6 L1262.6 585.2 Z" fill="#1e1e1e" stroke="#7ee41e" stroke-width="1.5" stroke-linejoin="round"/>
<path d="M1247.2 585.2 L1248.8 581.6 H1264.2 L1262.6 585.2 Z" fill="#7ee41e"/>
<circle cx="1258.2" cy="570.4" r="1.1" fill="#7ee41e"/><circle cx="1261.4" cy="572.0" r="1.2" fill="#7ee41e"/>
<text x="982.39" y="600.9" font-family="Liberation Sans" font-weight="700" font-size="11.34" textLength="5.53" lengthAdjust="spacingAndGlyphs" fill="#7ee41e" >C</text>
<text x="987.7" y="600.9" font-family="Liberation Sans" font-weight="700" font-size="11.34" textLength="5.23" lengthAdjust="spacingAndGlyphs" fill="#7ee41e" >a</text>
<text x="994.18 999.46 1003.57" y="600.9" font-family="Liberation Sans" font-weight="700" font-size="11.34" fill="#7ee41e" >li.</text>
<text x="1047.94" y="600.9" font-family="Liberation Sans" font-weight="700" font-size="11.34" textLength="5.77" lengthAdjust="spacingAndGlyphs" fill="#7ee41e" >M</text>
<text x="1053.1" y="600.9" font-family="Liberation Sans" font-weight="700" font-size="11.34" textLength="5.57" lengthAdjust="spacingAndGlyphs" fill="#7ee41e" >e</text>
<text x="1058.32" y="600.9" font-family="Liberation Sans" font-weight="700" font-size="11.34" textLength="5.05" lengthAdjust="spacingAndGlyphs" fill="#7ee41e" >a</text>
<text x="1063.33" y="600.9" font-family="Liberation Sans" font-weight="700" font-size="11.34" textLength="5.61" lengthAdjust="spacingAndGlyphs" fill="#7ee41e" >s</text>
<text x="1068.51" y="600.9" font-family="Liberation Sans" font-weight="700" font-size="11.34" fill="#7ee41e" >.</text>
<text x="1115.26" y="600.9" font-family="Liberation Sans" font-weight="700" font-size="11.34" textLength="5.62" lengthAdjust="spacingAndGlyphs" fill="#9a9a9a" >S</text>
<text x="1125.76" y="600.9" font-family="Liberation Sans" font-weight="700" font-size="11.34" textLength="5.79" lengthAdjust="spacingAndGlyphs" fill="#9a9a9a" >o</text>
<text x="1130.79" y="600.9" font-family="Liberation Sans" font-weight="700" font-size="11.34" textLength="6.12" lengthAdjust="spacingAndGlyphs" fill="#9a9a9a" >p</text>
<text x="1121.45" y="600.9" font-family="Liberation Sans" font-weight="700" font-size="11.34" fill="#9a9a9a" >t</text>
<text x="1179.65" y="600.9" font-family="Liberation Sans" font-weight="700" font-size="11.34" textLength="5.84" lengthAdjust="spacingAndGlyphs" fill="#7ee41e" >S</text>
<text x="1185.13" y="600.9" font-family="Liberation Sans" font-weight="700" font-size="11.34" textLength="5.47" lengthAdjust="spacingAndGlyphs" fill="#7ee41e" >a</text>
<text x="1190.9" y="600.9" font-family="Liberation Sans" font-weight="700" font-size="11.34" textLength="5.32" lengthAdjust="spacingAndGlyphs" fill="#7ee41e" >v</text>
<text x="1196.03" y="600.9" font-family="Liberation Sans" font-weight="700" font-size="11.34" textLength="6.04" lengthAdjust="spacingAndGlyphs" fill="#7ee41e" >e</text>
<text x="1244.13" y="600.9" font-family="Liberation Sans" font-weight="700" font-size="11.34" textLength="6" lengthAdjust="spacingAndGlyphs" fill="#7ee41e" >O</text>
<text x="1249.39" y="600.9" font-family="Liberation Sans" font-weight="700" font-size="11.34" textLength="6.5" lengthAdjust="spacingAndGlyphs" fill="#7ee41e" >p</text>
<text x="1255.31" y="600.9" font-family="Liberation Sans" font-weight="700" font-size="11.34" textLength="6.18" lengthAdjust="spacingAndGlyphs" fill="#7ee41e" >e</text>
<text x="1260.65" y="600.9" font-family="Liberation Sans" font-weight="700" font-size="11.34" textLength="6.78" lengthAdjust="spacingAndGlyphs" fill="#7ee41e" >n</text>
</g>
<line x1="322.5" y1="3" x2="322.5" y2="25" stroke="#5a5a5a" stroke-width="1" />
<line x1="322.5" y1="25" x2="322.5" y2="58" stroke="#5cb2f4" stroke-width="1" />
<line x1="322.5" y1="562" x2="322.5" y2="602.8" stroke="#5a5a5a" stroke-width="1" />
<line x1="645.5" y1="3" x2="645.5" y2="25" stroke="#5a5a5a" stroke-width="1" />
<line x1="645.5" y1="25" x2="645.5" y2="58" stroke="#5cb2f4" stroke-width="1" />
<line x1="645.5" y1="562" x2="645.5" y2="602.8" stroke="#5a5a5a" stroke-width="1" />
<line x1="964.5" y1="3" x2="964.5" y2="25" stroke="#5a5a5a" stroke-width="1" />
<line x1="964.5" y1="25" x2="964.5" y2="58" stroke="#5cb2f4" stroke-width="1" />
<line x1="964.5" y1="562" x2="964.5" y2="602.8" stroke="#5a5a5a" stroke-width="1" />
</svg></body></html>
